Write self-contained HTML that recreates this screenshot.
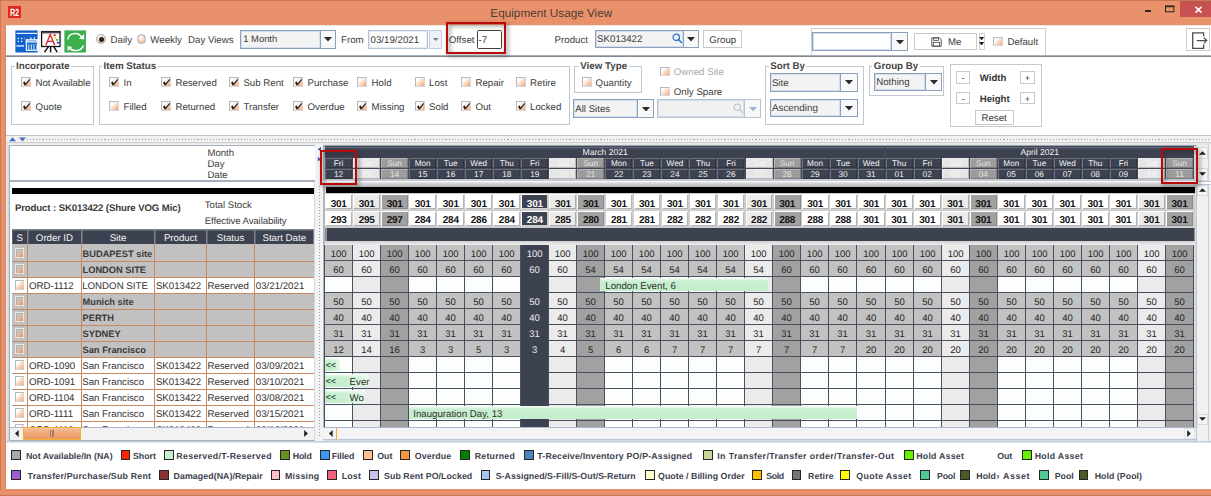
<!DOCTYPE html>
<html><head><meta charset="utf-8"><title>Equipment Usage View</title>
<style>
html,body{margin:0;padding:0;}
body{width:1211px;height:496px;overflow:hidden;position:relative;background:#fff;font-family:"Liberation Sans",sans-serif;text-rendering:geometricPrecision;}
div,span,svg{position:absolute;display:block;}
span{white-space:nowrap;line-height:20px;}
</style></head><body>
<div style="left:0px;top:0px;width:1211px;height:496px;background:#e9916b;"></div>
<div style="left:0px;top:0px;width:1211px;height:1px;background:#c77a57;"></div>
<div style="left:0px;top:0px;width:1px;height:496px;background:#c77a57;"></div>
<div style="left:0px;top:495px;width:1211px;height:1px;background:#c77a57;"></div>
<div style="left:6.2px;top:25px;width:1204.8px;height:464.3px;background:#fff;"></div>
<div style="left:5.2px;top:25px;width:1px;height:465.3px;background:#dd8762;"></div>
<div style="left:8px;top:5.5px;width:13px;height:12.5px;background:#dc2a1c;"></div>
<span style="left:9.7px;top:4px;font-size:10.4px;color:#fff;font-weight:bold;letter-spacing:-0.3px;transform:scaleX(0.7);transform-origin:0 0;">R2</span>
<span style="left:451.3px;top:4px;width:200px;text-align:center;font-size:11.75px;color:#503c35;">Equipment Usage View</span>
<div style="left:1180px;top:1px;width:31px;height:15.6px;background:#c75050;"></div>
<div style="left:1145px;top:10.2px;width:6.3px;height:1.8px;background:#2a2320;"></div>
<svg style="left:1164px;top:4px" width="12" height="10" viewBox="0 0 12 10"><rect x="1.5" y="2.2" width="8.4" height="5.6" fill="none" stroke="#2a2320" stroke-width="1"/><rect x="1" y="1.6" width="9.4" height="1.6" fill="#2a2320"/></svg>
<svg style="left:1193px;top:4.5px" width="12" height="10" viewBox="0 0 12 10"><path d="M2.5 1.9 L8.5 7.6 M8.5 1.9 L2.5 7.6" stroke="#fff" stroke-width="1.5" fill="none"/></svg>
<div style="left:6.2px;top:24.8px;width:1204.8px;height:1.4px;background:#e9e7e6;"></div>
<div style="left:6.2px;top:55.2px;width:1204.8px;height:1px;background:#a9b0ba;"></div>
<div style="left:6.2px;top:56.2px;width:1204.8px;height:1.3px;background:#7f8994;"></div>
<svg style="left:15.4px;top:29.8px" width="22.6" height="22.8" viewBox="0 0 22.6 22.8"><rect x="0" y="0" width="22.6" height="22.8" fill="#dcdcdc"/>
<rect x="0.5" y="0.5" width="22.1" height="21.9" fill="#0f62c9"/>
<rect x="1.4" y="2.8" width="21.2" height="1.2" fill="#e9f1fc"/>
<g fill="#d6e6fb"><rect x="2.6" y="7.8" width="1.5" height="1.4"/><rect x="6.0" y="7.8" width="1.5" height="1.4"/><rect x="9.0" y="7.8" width="1.2" height="1.4" opacity=".6"/><rect x="2.6" y="10.7" width="1.5" height="1.4"/><rect x="6.0" y="10.7" width="1.5" height="1.4"/></g>
<rect x="1.4" y="15.3" width="7.6" height="1.3" fill="#f4f8fe"/>
<rect x="11.4" y="9.9" width="11.2" height="10.4" fill="#0f62c9" stroke="#eef4fd" stroke-width="1.3"/>
<rect x="10.8" y="9.3" width="11.8" height="3.3" fill="#dbe8fa"/>
<rect x="13.2" y="10.4" width="8" height="0.9" fill="#0f62c9" opacity=".55"/>
<rect x="15.2" y="7.2" width="1.2" height="2.6" fill="#e4eefb"/><rect x="18.8" y="7.2" width="1.2" height="2.6" fill="#e4eefb"/>
<rect x="13.2" y="14.6" width="8.4" height="4.9" fill="#d9e7fa"/>
<g fill="#0f62c9"><rect x="14.3" y="14.9" width="1.5" height="4.3"/><rect x="16.9" y="14.9" width="1.5" height="4.3"/><rect x="19.5" y="14.9" width="1.5" height="4.3"/></g></svg>
<svg style="left:39.4px;top:29.8px" width="22.5" height="22.8" viewBox="0 0 22.5 22.8"><rect x="0" y="0" width="22.5" height="22.8" fill="#e2e2e2"/>
<rect x="0.6" y="0.6" width="21.3" height="21.6" fill="#fff"/>
<rect x="2.6" y="1.9" width="18.4" height="14.6" fill="#fff" stroke="#151515" stroke-width="1.3"/>
<rect x="2" y="1.3" width="19.6" height="1.2" fill="#151515"/>
<rect x="3.2" y="3.4" width="17.2" height="0.7" fill="#8a8a8a"/>
<path d="M6.8 15.2 L11.2 4.6 L15.7 15.2 M8.4 11.4 H14" stroke="#d9232b" stroke-width="1.35" fill="none"/>
<rect x="14.6" y="4.4" width="2.1" height="1.6" fill="#e0161e"/><rect x="15.2" y="6.8" width="2.1" height="1.6" fill="#f0d21a"/><rect x="17" y="9.1" width="2.1" height="1.6" fill="#22c02e"/><rect x="17.8" y="11.9" width="2.1" height="1.6" fill="#1a2ae8"/>
<path d="M11.6 16.6 V22.2 M9.4 16.6 L5.6 22.1 M14.8 16.6 L18.2 22.1" stroke="#151515" stroke-width="1.5" fill="none"/></svg>
<svg style="left:63.6px;top:29.8px" width="22.6" height="22.8" viewBox="0 0 22.6 22.8"><rect x="0" y="0" width="22.6" height="22.8" fill="#dcdcdc"/>
<rect x="0.5" y="0.5" width="21.8" height="21.9" fill="#3bb04d"/>
<path d="M3.7 9.4 Q4.6 3.5 11.4 3.5 Q15.6 3.5 17.8 7.6" stroke="#fff" stroke-width="1.5" fill="none"/>
<path d="M20.1 4.1 V9.4 L15 8.7 Z" fill="#fff"/>
<path d="M19.4 15.4 Q17.6 20.6 11.4 20.6 Q7.6 20.6 5.9 18.2" stroke="#fff" stroke-width="1.5" fill="none"/>
<path d="M3.6 16 V21 L8.3 17 Z" fill="#fff"/></svg>
<div style="left:96.4px;top:34.3px;width:9.8px;height:9.8px;border-radius:50%;box-sizing:border-box;border:1px solid #a3adb9;background:radial-gradient(circle at 35% 30%,#ffffff 0%,#fbd9c2 45%,#f0a673 100%);"></div>
<div style="left:98.6px;top:36.5px;width:5.4px;height:5.4px;border-radius:50%;background:#222;"></div>
<span style="left:110.5px;top:31px;font-size:9.7px;color:#3c3c3c;">Daily</span>
<div style="left:136.6px;top:34.3px;width:9.8px;height:9.8px;border-radius:50%;box-sizing:border-box;border:1px solid #a3adb9;background:radial-gradient(circle at 35% 30%,#ffffff 0%,#fbd9c2 45%,#f0a673 100%);"></div>
<span style="left:150.3px;top:31px;font-size:9.7px;color:#3c3c3c;">Weekly</span>
<span style="left:188px;top:31px;font-size:9.7px;color:#3c3c3c;">Day Views</span>
<div style="left:240px;top:29.7px;width:96px;height:18.9px;background:#f8f8f8;border:1px solid #8aa0bd;box-sizing:border-box;"></div>
<div style="left:240px;top:29.7px;width:80.5px;height:18.9px;background:#f3f3f3;border:1px solid #8aa0bd;box-shadow:inset 0 0 0 1px #d4dfee;box-sizing:border-box;"></div>
<span style="left:243.3px;top:29px;font-size:9.4px;color:#3c3c3c;">1 Month</span>
<svg style="left:324.25px;top:37.2px" width="8" height="4.5" viewBox="0 0 8 4.5"><path d="M0 0 H8 L4 4.5 Z" fill="#2b2b2b"/></svg>
<span style="left:341px;top:31px;font-size:9.7px;color:#3c3c3c;">From</span>
<div style="left:367.5px;top:29.7px;width:60px;height:18.9px;box-sizing:border-box;border:1px solid #b5c4d8;background:#fff;box-shadow:inset 0 0 0 1px #e4ebf4;"></div>
<span style="left:370.6px;top:31px;font-size:9.7px;color:#3c3c3c;">03/19/2021</span>
<div style="left:429.2px;top:29.7px;width:12.6px;height:18.9px;box-sizing:border-box;border:1px solid #c3cfde;background:#eef1f5;"></div>
<svg style="left:432.6px;top:37.9px" width="5.4" height="3" viewBox="0 0 5.4 3"><path d="M0 0 H5.4 L2.7 3 Z" fill="#6a7f9c"/></svg>
<span style="left:448.8px;top:31px;font-size:9.7px;color:#3c3c3c;">Offset</span>
<div style="left:477.2px;top:29.7px;width:24.5px;height:19px;box-sizing:border-box;border:1px solid #3f3f3f;border-radius:1.5px;background:#fff;"></div>
<span style="left:478.5px;top:31px;font-size:9.7px;color:#3c3c3c;">-7</span>
<div style="left:446px;top:22.2px;width:60.3px;height:31.6px;box-sizing:border-box;border:2px solid #b90a0a;filter:drop-shadow(2.5px 2.5px 2px rgba(30,20,20,.55));"></div>
<span style="left:554.6px;top:31px;font-size:9.7px;color:#3c3c3c;">Product</span>
<div style="left:595.3px;top:30px;width:103.7px;height:18.3px;background:#f8f8f8;border:1px solid #8aa0bd;box-sizing:border-box;"></div>
<div style="left:595.3px;top:30px;width:88.3px;height:18.3px;background:#f3f3f3;border:1px solid #8aa0bd;box-shadow:inset 0 0 0 1px #d4dfee;box-sizing:border-box;"></div>
<span style="left:597.1px;top:30px;font-size:9.7px;color:#3c3c3c;">SK013422</span>
<svg style="left:687.3px;top:37.2px" width="8" height="4.5" viewBox="0 0 8 4.5"><path d="M0 0 H8 L4 4.5 Z" fill="#2b2b2b"/></svg>
<svg style="left:671.5px;top:33px" width="11" height="11" viewBox="0 0 11 11"><circle cx="4.3" cy="4.3" r="3.2" fill="none" stroke="#2a78d2" stroke-width="1.3"/><path d="M6.6 6.6 L10 10" stroke="#2a78d2" stroke-width="1.5"/></svg>
<div style="left:703.2px;top:29.9px;width:39.1px;height:17.8px;box-sizing:border-box;border:1px solid #c9c9c9;background:#fff;"></div>
<span style="left:703.2px;top:31px;width:39.1px;text-align:center;font-size:9.7px;color:#3c3c3c;">Group</span>
<div style="left:810.5px;top:28px;width:235.8px;height:27.4px;box-sizing:border-box;border:1px solid #cfcfcf;border-bottom:none;background:#fff;"></div>
<div style="left:812px;top:32.3px;width:95.8px;height:18.7px;background:#f8f8f8;border:1px solid #8aa0bd;box-sizing:border-box;"></div>
<div style="left:812px;top:32.3px;width:80.3px;height:18.7px;background:#fff;border:1px solid #8aa0bd;box-shadow:inset 0 0 0 1px #d4dfee;box-sizing:border-box;"></div>
<svg style="left:896.05px;top:39.7px" width="8" height="4.5" viewBox="0 0 8 4.5"><path d="M0 0 H8 L4 4.5 Z" fill="#2b2b2b"/></svg>
<div style="left:914.2px;top:32.7px;width:63.2px;height:17.4px;box-sizing:border-box;border:1px solid #c9c9c9;background:#fff;"></div>
<svg style="left:930.5px;top:36.5px" width="11" height="10" viewBox="0 0 11 10"><path d="M0.8 0.8 H8.4 L10.2 2.4 V9.2 H0.8 Z" fill="none" stroke="#555" stroke-width="1"/><rect x="2.8" y="0.8" width="4.6" height="2.6" fill="none" stroke="#555" stroke-width="0.9"/><rect x="2.4" y="5.4" width="6.2" height="3.8" fill="none" stroke="#555" stroke-width="0.9"/></svg>
<span style="left:948px;top:33px;font-size:9.7px;color:#3c3c3c;">Me</span>
<div style="left:978.6px;top:32.6px;width:6.9px;height:17.5px;box-sizing:border-box;border:1px solid #d2d2d2;background:#fff;"></div>
<svg style="left:979.4px;top:37.25px" width="5.2" height="3.3" viewBox="0 0 5.2 3.3"><path d="M0 0 H5.2 L2.6 3.3 Z" fill="#1e1e1e"/></svg>
<svg style="left:979.4px;top:41.7px" width="5.2" height="3.6" viewBox="0 0 5.2 3.6"><path d="M0 0 H5.2 L2.6 3.6 Z" fill="#1e1e1e"/></svg>
<div style="left:992.9px;top:36.5px;width:9.9px;height:9.9px;box-sizing:border-box;border:1px solid #adbac9;border-top-width:1.5px;border-left-width:1.5px;border-right-color:#d3d8de;border-bottom-color:#d3d8de;background:linear-gradient(135deg,#ffffff 22%,#fde0cb 52%,#f3a673 100%);"></div>
<span style="left:1007.4px;top:33px;font-size:9.7px;color:#3c3c3c;">Default</span>
<div style="left:1186.4px;top:28.3px;width:23.4px;height:22.6px;box-sizing:border-box;border:1px solid #cdcdcd;background:#fff;"></div>
<svg style="left:1190px;top:31px" width="19" height="19" viewBox="0 0 19 19"><path d="M13.6 5.6 V1.9 H2.7 V17.3 H13.6 V13.6" fill="none" stroke="#4d4d4d" stroke-width="1.3"/><path d="M6.8 9.6 H16.6 M13.8 6.8 L16.8 9.6 L13.8 12.4" fill="none" stroke="#4d4d4d" stroke-width="1.2"/></svg>
<div style="left:10.5px;top:65.5px;width:83.5px;height:59.5px;box-sizing:border-box;border:1px solid #c4c8cc;"></div>
<span style="left:14.5px;top:60.9px;font-size:9.75px;line-height:11px;font-weight:bold;color:#454545;background:#fff;padding:0 1.5px;">Incorporate</span>
<div style="left:21.2px;top:77.2px;width:9.9px;height:9.9px;box-sizing:border-box;border:1px solid #adbac9;border-top-width:1.5px;border-left-width:1.5px;border-right-color:#d3d8de;border-bottom-color:#d3d8de;background:linear-gradient(135deg,#ffffff 22%,#fde0cb 52%,#f3a673 100%);"></div>
<svg style="left:21.2px;top:77.2px" width="10" height="10" viewBox="0 0 10 10"><path d="M2.0 5.4 L3.7 4.5 L4.5 6.5 L8.5 2.1 L9.2 2.7 L4.6 8.4 L3.7 8.4 Z" fill="#1a1a1a"/></svg>
<span style="left:35.6px;top:74px;font-size:9.7px;color:#3c3c3c;letter-spacing:-0.12px;">Not Available</span>
<div style="left:21.2px;top:101.3px;width:9.9px;height:9.9px;box-sizing:border-box;border:1px solid #adbac9;border-top-width:1.5px;border-left-width:1.5px;border-right-color:#d3d8de;border-bottom-color:#d3d8de;background:linear-gradient(135deg,#ffffff 22%,#fde0cb 52%,#f3a673 100%);"></div>
<svg style="left:21.2px;top:101.3px" width="10" height="10" viewBox="0 0 10 10"><path d="M2.0 5.4 L3.7 4.5 L4.5 6.5 L8.5 2.1 L9.2 2.7 L4.6 8.4 L3.7 8.4 Z" fill="#1a1a1a"/></svg>
<span style="left:35.6px;top:98px;font-size:9.7px;color:#3c3c3c;">Quote</span>
<div style="left:98.5px;top:65.5px;width:471.5px;height:59.5px;box-sizing:border-box;border:1px solid #c4c8cc;"></div>
<span style="left:102.1px;top:60.9px;font-size:9.75px;line-height:11px;font-weight:bold;color:#454545;background:#fff;padding:0 1.5px;">Item Status</span>
<div style="left:109.1px;top:77.2px;width:9.9px;height:9.9px;box-sizing:border-box;border:1px solid #adbac9;border-top-width:1.5px;border-left-width:1.5px;border-right-color:#d3d8de;border-bottom-color:#d3d8de;background:linear-gradient(135deg,#ffffff 22%,#fde0cb 52%,#f3a673 100%);"></div>
<svg style="left:109.1px;top:77.2px" width="10" height="10" viewBox="0 0 10 10"><path d="M2.0 5.4 L3.7 4.5 L4.5 6.5 L8.5 2.1 L9.2 2.7 L4.6 8.4 L3.7 8.4 Z" fill="#1a1a1a"/></svg>
<span style="left:123.5px;top:74px;font-size:9.7px;color:#3c3c3c;">In</span>
<div style="left:161px;top:77.2px;width:9.9px;height:9.9px;box-sizing:border-box;border:1px solid #adbac9;border-top-width:1.5px;border-left-width:1.5px;border-right-color:#d3d8de;border-bottom-color:#d3d8de;background:linear-gradient(135deg,#ffffff 22%,#fde0cb 52%,#f3a673 100%);"></div>
<svg style="left:161px;top:77.2px" width="10" height="10" viewBox="0 0 10 10"><path d="M2.0 5.4 L3.7 4.5 L4.5 6.5 L8.5 2.1 L9.2 2.7 L4.6 8.4 L3.7 8.4 Z" fill="#1a1a1a"/></svg>
<span style="left:175.4px;top:74px;font-size:9.7px;color:#3c3c3c;">Reserved</span>
<div style="left:229px;top:77.2px;width:9.9px;height:9.9px;box-sizing:border-box;border:1px solid #adbac9;border-top-width:1.5px;border-left-width:1.5px;border-right-color:#d3d8de;border-bottom-color:#d3d8de;background:linear-gradient(135deg,#ffffff 22%,#fde0cb 52%,#f3a673 100%);"></div>
<svg style="left:229px;top:77.2px" width="10" height="10" viewBox="0 0 10 10"><path d="M2.0 5.4 L3.7 4.5 L4.5 6.5 L8.5 2.1 L9.2 2.7 L4.6 8.4 L3.7 8.4 Z" fill="#1a1a1a"/></svg>
<span style="left:243.4px;top:74px;font-size:9.7px;color:#3c3c3c;">Sub Rent</span>
<div style="left:293.1px;top:77.2px;width:9.9px;height:9.9px;box-sizing:border-box;border:1px solid #adbac9;border-top-width:1.5px;border-left-width:1.5px;border-right-color:#d3d8de;border-bottom-color:#d3d8de;background:linear-gradient(135deg,#ffffff 22%,#fde0cb 52%,#f3a673 100%);"></div>
<svg style="left:293.1px;top:77.2px" width="10" height="10" viewBox="0 0 10 10"><path d="M2.0 5.4 L3.7 4.5 L4.5 6.5 L8.5 2.1 L9.2 2.7 L4.6 8.4 L3.7 8.4 Z" fill="#1a1a1a"/></svg>
<span style="left:307.5px;top:74px;font-size:9.7px;color:#3c3c3c;">Purchase</span>
<div style="left:357.2px;top:77.2px;width:9.9px;height:9.9px;box-sizing:border-box;border:1px solid #adbac9;border-top-width:1.5px;border-left-width:1.5px;border-right-color:#d3d8de;border-bottom-color:#d3d8de;background:linear-gradient(135deg,#ffffff 22%,#fde0cb 52%,#f3a673 100%);"></div>
<span style="left:371.6px;top:74px;font-size:9.7px;color:#3c3c3c;">Hold</span>
<div style="left:414.7px;top:77.2px;width:9.9px;height:9.9px;box-sizing:border-box;border:1px solid #adbac9;border-top-width:1.5px;border-left-width:1.5px;border-right-color:#d3d8de;border-bottom-color:#d3d8de;background:linear-gradient(135deg,#ffffff 22%,#fde0cb 52%,#f3a673 100%);"></div>
<span style="left:429.1px;top:74px;font-size:9.7px;color:#3c3c3c;">Lost</span>
<div style="left:461px;top:77.2px;width:9.9px;height:9.9px;box-sizing:border-box;border:1px solid #adbac9;border-top-width:1.5px;border-left-width:1.5px;border-right-color:#d3d8de;border-bottom-color:#d3d8de;background:linear-gradient(135deg,#ffffff 22%,#fde0cb 52%,#f3a673 100%);"></div>
<span style="left:475.4px;top:74px;font-size:9.7px;color:#3c3c3c;">Repair</span>
<div style="left:515.7px;top:77.2px;width:9.9px;height:9.9px;box-sizing:border-box;border:1px solid #adbac9;border-top-width:1.5px;border-left-width:1.5px;border-right-color:#d3d8de;border-bottom-color:#d3d8de;background:linear-gradient(135deg,#ffffff 22%,#fde0cb 52%,#f3a673 100%);"></div>
<span style="left:530.1px;top:74px;font-size:9.7px;color:#3c3c3c;">Retire</span>
<div style="left:109.1px;top:101.3px;width:9.9px;height:9.9px;box-sizing:border-box;border:1px solid #adbac9;border-top-width:1.5px;border-left-width:1.5px;border-right-color:#d3d8de;border-bottom-color:#d3d8de;background:linear-gradient(135deg,#ffffff 22%,#fde0cb 52%,#f3a673 100%);"></div>
<span style="left:123.5px;top:98px;font-size:9.7px;color:#3c3c3c;">Filled</span>
<div style="left:161px;top:101.3px;width:9.9px;height:9.9px;box-sizing:border-box;border:1px solid #adbac9;border-top-width:1.5px;border-left-width:1.5px;border-right-color:#d3d8de;border-bottom-color:#d3d8de;background:linear-gradient(135deg,#ffffff 22%,#fde0cb 52%,#f3a673 100%);"></div>
<svg style="left:161px;top:101.3px" width="10" height="10" viewBox="0 0 10 10"><path d="M2.0 5.4 L3.7 4.5 L4.5 6.5 L8.5 2.1 L9.2 2.7 L4.6 8.4 L3.7 8.4 Z" fill="#1a1a1a"/></svg>
<span style="left:175.4px;top:98px;font-size:9.7px;color:#3c3c3c;">Returned</span>
<div style="left:229px;top:101.3px;width:9.9px;height:9.9px;box-sizing:border-box;border:1px solid #adbac9;border-top-width:1.5px;border-left-width:1.5px;border-right-color:#d3d8de;border-bottom-color:#d3d8de;background:linear-gradient(135deg,#ffffff 22%,#fde0cb 52%,#f3a673 100%);"></div>
<svg style="left:229px;top:101.3px" width="10" height="10" viewBox="0 0 10 10"><path d="M2.0 5.4 L3.7 4.5 L4.5 6.5 L8.5 2.1 L9.2 2.7 L4.6 8.4 L3.7 8.4 Z" fill="#1a1a1a"/></svg>
<span style="left:243.4px;top:98px;font-size:9.7px;color:#3c3c3c;">Transfer</span>
<div style="left:293.1px;top:101.3px;width:9.9px;height:9.9px;box-sizing:border-box;border:1px solid #adbac9;border-top-width:1.5px;border-left-width:1.5px;border-right-color:#d3d8de;border-bottom-color:#d3d8de;background:linear-gradient(135deg,#ffffff 22%,#fde0cb 52%,#f3a673 100%);"></div>
<svg style="left:293.1px;top:101.3px" width="10" height="10" viewBox="0 0 10 10"><path d="M2.0 5.4 L3.7 4.5 L4.5 6.5 L8.5 2.1 L9.2 2.7 L4.6 8.4 L3.7 8.4 Z" fill="#1a1a1a"/></svg>
<span style="left:307.5px;top:98px;font-size:9.7px;color:#3c3c3c;">Overdue</span>
<div style="left:357.2px;top:101.3px;width:9.9px;height:9.9px;box-sizing:border-box;border:1px solid #adbac9;border-top-width:1.5px;border-left-width:1.5px;border-right-color:#d3d8de;border-bottom-color:#d3d8de;background:linear-gradient(135deg,#ffffff 22%,#fde0cb 52%,#f3a673 100%);"></div>
<svg style="left:357.2px;top:101.3px" width="10" height="10" viewBox="0 0 10 10"><path d="M2.0 5.4 L3.7 4.5 L4.5 6.5 L8.5 2.1 L9.2 2.7 L4.6 8.4 L3.7 8.4 Z" fill="#1a1a1a"/></svg>
<span style="left:371.6px;top:98px;font-size:9.7px;color:#3c3c3c;">Missing</span>
<div style="left:414.7px;top:101.3px;width:9.9px;height:9.9px;box-sizing:border-box;border:1px solid #adbac9;border-top-width:1.5px;border-left-width:1.5px;border-right-color:#d3d8de;border-bottom-color:#d3d8de;background:linear-gradient(135deg,#ffffff 22%,#fde0cb 52%,#f3a673 100%);"></div>
<svg style="left:414.7px;top:101.3px" width="10" height="10" viewBox="0 0 10 10"><path d="M2.0 5.4 L3.7 4.5 L4.5 6.5 L8.5 2.1 L9.2 2.7 L4.6 8.4 L3.7 8.4 Z" fill="#1a1a1a"/></svg>
<span style="left:429.1px;top:98px;font-size:9.7px;color:#3c3c3c;">Sold</span>
<div style="left:461px;top:101.3px;width:9.9px;height:9.9px;box-sizing:border-box;border:1px solid #adbac9;border-top-width:1.5px;border-left-width:1.5px;border-right-color:#d3d8de;border-bottom-color:#d3d8de;background:linear-gradient(135deg,#ffffff 22%,#fde0cb 52%,#f3a673 100%);"></div>
<svg style="left:461px;top:101.3px" width="10" height="10" viewBox="0 0 10 10"><path d="M2.0 5.4 L3.7 4.5 L4.5 6.5 L8.5 2.1 L9.2 2.7 L4.6 8.4 L3.7 8.4 Z" fill="#1a1a1a"/></svg>
<span style="left:475.4px;top:98px;font-size:9.7px;color:#3c3c3c;">Out</span>
<div style="left:515.7px;top:101.3px;width:9.9px;height:9.9px;box-sizing:border-box;border:1px solid #adbac9;border-top-width:1.5px;border-left-width:1.5px;border-right-color:#d3d8de;border-bottom-color:#d3d8de;background:linear-gradient(135deg,#ffffff 22%,#fde0cb 52%,#f3a673 100%);"></div>
<svg style="left:515.7px;top:101.3px" width="10" height="10" viewBox="0 0 10 10"><path d="M2.0 5.4 L3.7 4.5 L4.5 6.5 L8.5 2.1 L9.2 2.7 L4.6 8.4 L3.7 8.4 Z" fill="#1a1a1a"/></svg>
<span style="left:530.1px;top:98px;font-size:9.7px;color:#3c3c3c;">Locked</span>
<div style="left:574.4px;top:65.5px;width:67.6px;height:27.1px;box-sizing:border-box;border:1px solid #c4c8cc;"></div>
<span style="left:578.8px;top:60.9px;font-size:9.75px;line-height:11px;font-weight:bold;color:#454545;background:#fff;padding:0 1.5px;">View Type</span>
<div style="left:581.7px;top:77.2px;width:9.9px;height:9.9px;box-sizing:border-box;border:1px solid #adbac9;border-top-width:1.5px;border-left-width:1.5px;border-right-color:#d3d8de;border-bottom-color:#d3d8de;background:linear-gradient(135deg,#ffffff 22%,#fde0cb 52%,#f3a673 100%);"></div>
<span style="left:595.6px;top:74px;font-size:9.7px;color:#3c3c3c;">Quantity</span>
<div style="left:660.1px;top:66.5px;width:9.9px;height:9.9px;box-sizing:border-box;border:1px solid #adbac9;border-top-width:1.5px;border-left-width:1.5px;border-right-color:#d3d8de;border-bottom-color:#d3d8de;background:linear-gradient(135deg,#ffffff 22%,#fde0cb 52%,#f3a673 100%);"></div>
<span style="left:673.8px;top:63px;font-size:9.7px;color:#a9a9a9;">Owned Site</span>
<div style="left:660.1px;top:86.5px;width:9.9px;height:9.9px;box-sizing:border-box;border:1px solid #adbac9;border-top-width:1.5px;border-left-width:1.5px;border-right-color:#d3d8de;border-bottom-color:#d3d8de;background:linear-gradient(135deg,#ffffff 22%,#fde0cb 52%,#f3a673 100%);"></div>
<span style="left:673.8px;top:83px;font-size:9.7px;color:#3c3c3c;">Only Spare</span>
<div style="left:573px;top:99.4px;width:81.4px;height:18.6px;background:#f8f8f8;border:1px solid #8aa0bd;box-sizing:border-box;"></div>
<div style="left:573px;top:99.4px;width:65.3px;height:18.6px;background:#f3f3f3;border:1px solid #8aa0bd;box-shadow:inset 0 0 0 1px #d4dfee;box-sizing:border-box;"></div>
<span style="left:575.2px;top:100px;font-size:9.7px;color:#3c3c3c;">All Sites</span>
<svg style="left:642.35px;top:106.75px" width="8" height="4.5" viewBox="0 0 8 4.5"><path d="M0 0 H8 L4 4.5 Z" fill="#2b2b2b"/></svg>
<div style="left:657px;top:99.4px;width:103.6px;height:18.6px;background:#f8f8f8;border:1px solid #b9c3d0;box-sizing:border-box;"></div>
<div style="left:657px;top:99.4px;width:88px;height:18.6px;background:#f1f1f1;border:1px solid #b9c3d0;box-shadow:inset 0 0 0 1px #d4dfee;box-sizing:border-box;"></div>
<svg style="left:748.8px;top:106.75px" width="8" height="4.5" viewBox="0 0 8 4.5"><path d="M0 0 H8 L4 4.5 Z" fill="#9db4d4"/></svg>
<svg style="left:733px;top:102.6px" width="11" height="11" viewBox="0 0 11 11"><circle cx="4.3" cy="4.3" r="3.2" fill="none" stroke="#c6c6c6" stroke-width="1.2"/><path d="M6.6 6.6 L10 10" stroke="#c6c6c6" stroke-width="1.4"/></svg>
<div style="left:764.5px;top:65.5px;width:99.1px;height:59.5px;box-sizing:border-box;border:1px solid #c4c8cc;"></div>
<span style="left:768.8px;top:60.9px;font-size:9.75px;line-height:11px;font-weight:bold;color:#454545;background:#fff;padding:0 1.5px;">Sort By</span>
<div style="left:769.5px;top:73px;width:88.1px;height:18.8px;background:#f8f8f8;border:1px solid #8aa0bd;box-sizing:border-box;"></div>
<div style="left:769.5px;top:73px;width:71.8px;height:18.8px;background:#f3f3f3;border:1px solid #8aa0bd;box-shadow:inset 0 0 0 1px #d4dfee;box-sizing:border-box;"></div>
<span style="left:771.9px;top:74px;font-size:9.7px;color:#3c3c3c;">Site</span>
<svg style="left:845.45px;top:80.45px" width="8" height="4.5" viewBox="0 0 8 4.5"><path d="M0 0 H8 L4 4.5 Z" fill="#2b2b2b"/></svg>
<div style="left:769.5px;top:98.7px;width:88.1px;height:18.8px;background:#f8f8f8;border:1px solid #8aa0bd;box-sizing:border-box;"></div>
<div style="left:769.5px;top:98.7px;width:71.8px;height:18.8px;background:#f3f3f3;border:1px solid #8aa0bd;box-shadow:inset 0 0 0 1px #d4dfee;box-sizing:border-box;"></div>
<span style="left:771.9px;top:99px;font-size:9.9px;color:#3c3c3c;">Ascending</span>
<svg style="left:845.45px;top:106.15px" width="8" height="4.5" viewBox="0 0 8 4.5"><path d="M0 0 H8 L4 4.5 Z" fill="#2b2b2b"/></svg>
<div style="left:868.7px;top:65.8px;width:75.3px;height:30.6px;box-sizing:border-box;border:1px solid #c4c8cc;"></div>
<span style="left:872.3px;top:61.2px;font-size:9.75px;line-height:11px;font-weight:bold;color:#454545;background:#fff;padding:0 1.5px;">Group By</span>
<div style="left:874px;top:73.2px;width:67.8px;height:18.1px;background:#f8f8f8;border:1px solid #8aa0bd;box-sizing:border-box;"></div>
<div style="left:874px;top:73.2px;width:51.8px;height:18.1px;background:#f3f3f3;border:1px solid #8aa0bd;box-shadow:inset 0 0 0 1px #d4dfee;box-sizing:border-box;"></div>
<span style="left:876.2px;top:73px;font-size:9.7px;color:#3c3c3c;">Nothing</span>
<svg style="left:929.8px;top:80.3px" width="8" height="4.5" viewBox="0 0 8 4.5"><path d="M0 0 H8 L4 4.5 Z" fill="#2b2b2b"/></svg>
<div style="left:950.4px;top:64.3px;width:91.4px;height:62.4px;box-sizing:border-box;border:1px solid #c9c9c9;"></div>
<div style="left:956.2px;top:71px;width:14px;height:12.5px;box-sizing:border-box;border:1px solid #c9c9c9;background:#fff;"></div>
<span style="left:956.2px;top:68px;width:14px;text-align:center;font-size:9px;color:#3c3c3c;">-</span>
<div style="left:1020px;top:71px;width:14.6px;height:12.5px;box-sizing:border-box;border:1px solid #c9c9c9;background:#fff;"></div>
<span style="left:1020px;top:68px;width:14.6px;text-align:center;font-size:9px;color:#3c3c3c;">+</span>
<span style="left:979.8px;top:69px;font-size:9.6px;color:#333;font-weight:bold;">Width</span>
<div style="left:956.2px;top:91.8px;width:14px;height:12.6px;box-sizing:border-box;border:1px solid #c9c9c9;background:#fff;"></div>
<span style="left:956.2px;top:89px;width:14px;text-align:center;font-size:9px;color:#3c3c3c;">-</span>
<div style="left:1020px;top:91.8px;width:14.6px;height:12.6px;box-sizing:border-box;border:1px solid #c9c9c9;background:#fff;"></div>
<span style="left:1020px;top:89px;width:14.6px;text-align:center;font-size:9px;color:#3c3c3c;">+</span>
<span style="left:979.8px;top:90px;font-size:9.6px;color:#333;font-weight:bold;">Height</span>
<div style="left:974.5px;top:110px;width:39.2px;height:14.7px;box-sizing:border-box;border:1px solid #c9c9c9;background:#fff;"></div>
<span style="left:974.5px;top:109px;width:39.2px;text-align:center;font-size:9.7px;color:#3c3c3c;">Reset</span>
<div style="left:6.2px;top:134.9px;width:1204.8px;height:1.1px;background:#c2c2c2;"></div>
<div style="left:6.2px;top:136px;width:1204.8px;height:6px;background:#f1f1f1;"></div>
<div style="left:27.4px;top:139px;width:1183.6px;height:1.1px;background:repeating-linear-gradient(90deg,#9c9c9c 0 1.1px,transparent 1.1px 3.1px);"></div>
<svg style="left:9px;top:137px" width="18" height="5" viewBox="0 0 18 5"><path d="M0 4.2 L3.5 0.2 L7 4.2 Z" fill="#4a6fc0"/><path d="M10 0.4 L17 0.4 L13.5 4.4 Z" fill="#4a6fc0"/></svg>
<div style="left:6.2px;top:142px;width:1204.8px;height:1px;background:#cfcfcf;"></div>
<div style="left:6.2px;top:143px;width:2.6px;height:300px;background:linear-gradient(90deg,#efefef,#cfd3d8);"></div>
<div style="left:6.2px;top:143px;width:317px;height:2px;background:linear-gradient(180deg,#e4e4e4,#f6f6f6);"></div>
<div style="left:9.3px;top:144.9px;width:306.5px;height:36.4px;box-sizing:border-box;border:1px solid #a6b0bc;border-right-color:#c6ccd3;background:#fff;"></div>
<span style="left:207.4px;top:144px;font-size:9.6px;color:#3c3c3c;">Month</span>
<span style="left:207.4px;top:155px;font-size:9.6px;color:#3c3c3c;">Day</span>
<span style="left:207.4px;top:166px;font-size:9.6px;color:#3c3c3c;">Date</span>
<div style="left:9.3px;top:181.3px;width:305.3px;height:259.9px;box-sizing:border-box;border:1px solid #a6b0bc;border-right-color:#d6dae0;background:#fff;"></div>
<div style="left:11.8px;top:187.6px;width:301.8px;height:6.5px;background:#000;"></div>
<span style="left:14.9px;top:199px;font-size:9.6px;color:#3a3a3a;font-weight:bold;letter-spacing:-0.099px;">Product : SK013422 (Shure VOG Mic)</span>
<span style="left:204.8px;top:196px;font-size:9.6px;color:#3c3c3c;">Total Stock</span>
<span style="left:204.8px;top:212px;font-size:9.6px;color:#3c3c3c;letter-spacing:-0.1px;">Effective Availability</span>
<div style="left:11.8px;top:229.3px;width:301.8px;height:15px;background:#7d8391;"></div>
<div style="left:12.2px;top:229.6px;width:15.1px;height:14.7px;background:#3d4251;box-shadow:inset 1px 1px 0 #5d6373;"></div>
<span style="left:7.2px;top:229px;width:25.1px;text-align:center;font-size:9.7px;color:#f4f4f4;">S</span>
<div style="left:28.3px;top:229.6px;width:52.3px;height:14.7px;background:#3d4251;box-shadow:inset 1px 1px 0 #5d6373;"></div>
<span style="left:23.3px;top:229px;width:62.3px;text-align:center;font-size:9.7px;color:#f4f4f4;">Order ID</span>
<div style="left:81.6px;top:229.6px;width:72.8px;height:14.7px;background:#3d4251;box-shadow:inset 1px 1px 0 #5d6373;"></div>
<span style="left:76.6px;top:229px;width:82.8px;text-align:center;font-size:9.7px;color:#f4f4f4;">Site</span>
<div style="left:155.3px;top:229.6px;width:50.6px;height:14.7px;background:#3d4251;box-shadow:inset 1px 1px 0 #5d6373;"></div>
<span style="left:150.3px;top:229px;width:60.6px;text-align:center;font-size:9.7px;color:#f4f4f4;">Product</span>
<div style="left:206.8px;top:229.6px;width:47.5px;height:14.7px;background:#3d4251;box-shadow:inset 1px 1px 0 #5d6373;"></div>
<span style="left:201.8px;top:229px;width:57.5px;text-align:center;font-size:9.7px;color:#f4f4f4;">Status</span>
<div style="left:255.2px;top:229.6px;width:58.2px;height:14.7px;background:#3d4251;box-shadow:inset 1px 1px 0 #5d6373;"></div>
<span style="left:250.2px;top:229px;width:68.2px;text-align:center;font-size:9.7px;color:#f4f4f4;">Start Date</span>
<div style="left:11px;top:244px;width:302.6px;height:183.2px;overflow:hidden;">
<div style="left:0.8px;top:0px;width:301.8px;height:17px;background:#c1c1c1;"></div>
<div style="left:0.8px;top:17px;width:301.8px;height:16px;background:#c1c1c1;"></div>
<div style="left:0.8px;top:33px;width:301.8px;height:16px;background:#fff;"></div>
<div style="left:0.8px;top:49px;width:301.8px;height:16px;background:#c1c1c1;"></div>
<div style="left:0.8px;top:65px;width:301.8px;height:16px;background:#c1c1c1;"></div>
<div style="left:0.8px;top:81px;width:301.8px;height:16px;background:#c1c1c1;"></div>
<div style="left:0.8px;top:97px;width:301.8px;height:16px;background:#c1c1c1;"></div>
<div style="left:0.8px;top:113px;width:301.8px;height:16px;background:#fff;"></div>
<div style="left:0.8px;top:129px;width:301.8px;height:16px;background:#fff;"></div>
<div style="left:0.8px;top:145px;width:301.8px;height:16px;background:#fff;"></div>
<div style="left:0.8px;top:161px;width:301.8px;height:16px;background:#fff;"></div>
<div style="left:0.8px;top:177px;width:301.8px;height:16px;background:#fff;"></div>
<div style="left:0.8px;top:16.7px;width:301.8px;height:1.2px;background:#c98a63;"></div>
<div style="left:0.8px;top:32.7px;width:301.8px;height:1.2px;background:#c98a63;"></div>
<div style="left:0.8px;top:48.7px;width:301.8px;height:1.2px;background:#c98a63;"></div>
<div style="left:0.8px;top:64.7px;width:301.8px;height:1.2px;background:#c98a63;"></div>
<div style="left:0.8px;top:80.7px;width:301.8px;height:1.2px;background:#c98a63;"></div>
<div style="left:0.8px;top:96.7px;width:301.8px;height:1.2px;background:#c98a63;"></div>
<div style="left:0.8px;top:112.7px;width:301.8px;height:1.2px;background:#c98a63;"></div>
<div style="left:0.8px;top:128.7px;width:301.8px;height:1.2px;background:#c98a63;"></div>
<div style="left:0.8px;top:144.7px;width:301.8px;height:1.2px;background:#c98a63;"></div>
<div style="left:0.8px;top:160.7px;width:301.8px;height:1.2px;background:#c98a63;"></div>
<div style="left:0.8px;top:176.7px;width:301.8px;height:1.2px;background:#c98a63;"></div>
<div style="left:0.8px;top:192.7px;width:301.8px;height:1.2px;background:#c98a63;"></div>
<div style="left:16.3px;top:0.3px;width:1.1px;height:182.9px;background:#c98a63;"></div>
<div style="left:69.6px;top:0.3px;width:1.1px;height:182.9px;background:#c98a63;"></div>
<div style="left:143.3px;top:0.3px;width:1.1px;height:182.9px;background:#c98a63;"></div>
<div style="left:194.8px;top:0.3px;width:1.1px;height:182.9px;background:#c98a63;"></div>
<div style="left:243.2px;top:0.3px;width:1.1px;height:182.9px;background:#c98a63;"></div>
<div style="left:3.5px;top:4.4px;width:9.9px;height:9.9px;box-sizing:border-box;border:1px solid #e6e6e6;box-shadow:inset 0.6px 0.6px 0 0.4px #aeb3ba;background:linear-gradient(135deg,#cbcbcb 18%,#e2b79c 55%,#ec9560 100%);"></div>
<span style="left:71.5px;top:0px;font-size:9.3px;color:#3a3a3a;font-weight:bold;">BUDAPEST site</span>
<div style="left:3.5px;top:20.4px;width:9.9px;height:9.9px;box-sizing:border-box;border:1px solid #e6e6e6;box-shadow:inset 0.6px 0.6px 0 0.4px #aeb3ba;background:linear-gradient(135deg,#cbcbcb 18%,#e2b79c 55%,#ec9560 100%);"></div>
<span style="left:71.5px;top:16px;font-size:9.3px;color:#3a3a3a;font-weight:bold;">LONDON SITE</span>
<div style="left:3.5px;top:36.4px;width:9.9px;height:9.9px;box-sizing:border-box;border:1px solid #adbac9;border-top-width:1.5px;border-left-width:1.5px;border-right-color:#d3d8de;border-bottom-color:#d3d8de;background:linear-gradient(135deg,#ffffff 22%,#fde0cb 52%,#f3a673 100%);"></div>
<span style="left:17.9px;top:33px;font-size:9.7px;color:#333;">ORD-1112</span>
<span style="left:71.2px;top:33px;font-size:9.7px;color:#333;">LONDON SITE</span>
<span style="left:144.9px;top:33px;font-size:9.7px;color:#333;">SK013422</span>
<span style="left:196.4px;top:33px;font-size:9.7px;color:#333;">Reserved</span>
<span style="left:244.8px;top:33px;font-size:9.7px;color:#333;">03/21/2021</span>
<div style="left:3.5px;top:52.4px;width:9.9px;height:9.9px;box-sizing:border-box;border:1px solid #e6e6e6;box-shadow:inset 0.6px 0.6px 0 0.4px #aeb3ba;background:linear-gradient(135deg,#cbcbcb 18%,#e2b79c 55%,#ec9560 100%);"></div>
<span style="left:71.5px;top:48px;font-size:9.3px;color:#3a3a3a;font-weight:bold;">Munich site</span>
<div style="left:3.5px;top:68.4px;width:9.9px;height:9.9px;box-sizing:border-box;border:1px solid #e6e6e6;box-shadow:inset 0.6px 0.6px 0 0.4px #aeb3ba;background:linear-gradient(135deg,#cbcbcb 18%,#e2b79c 55%,#ec9560 100%);"></div>
<span style="left:71.5px;top:64px;font-size:9.3px;color:#3a3a3a;font-weight:bold;">PERTH</span>
<div style="left:3.5px;top:84.4px;width:9.9px;height:9.9px;box-sizing:border-box;border:1px solid #e6e6e6;box-shadow:inset 0.6px 0.6px 0 0.4px #aeb3ba;background:linear-gradient(135deg,#cbcbcb 18%,#e2b79c 55%,#ec9560 100%);"></div>
<span style="left:71.5px;top:80px;font-size:9.3px;color:#3a3a3a;font-weight:bold;">SYDNEY</span>
<div style="left:3.5px;top:100.4px;width:9.9px;height:9.9px;box-sizing:border-box;border:1px solid #e6e6e6;box-shadow:inset 0.6px 0.6px 0 0.4px #aeb3ba;background:linear-gradient(135deg,#cbcbcb 18%,#e2b79c 55%,#ec9560 100%);"></div>
<span style="left:71.5px;top:96px;font-size:9.3px;color:#3a3a3a;font-weight:bold;">San Francisco</span>
<div style="left:3.5px;top:116.4px;width:9.9px;height:9.9px;box-sizing:border-box;border:1px solid #adbac9;border-top-width:1.5px;border-left-width:1.5px;border-right-color:#d3d8de;border-bottom-color:#d3d8de;background:linear-gradient(135deg,#ffffff 22%,#fde0cb 52%,#f3a673 100%);"></div>
<span style="left:17.9px;top:113px;font-size:9.7px;color:#333;">ORD-1090</span>
<span style="left:71.2px;top:113px;font-size:9.7px;color:#333;">San Francisco</span>
<span style="left:144.9px;top:113px;font-size:9.7px;color:#333;">SK013422</span>
<span style="left:196.4px;top:113px;font-size:9.7px;color:#333;">Reserved</span>
<span style="left:244.8px;top:113px;font-size:9.7px;color:#333;">03/09/2021</span>
<div style="left:3.5px;top:132.4px;width:9.9px;height:9.9px;box-sizing:border-box;border:1px solid #adbac9;border-top-width:1.5px;border-left-width:1.5px;border-right-color:#d3d8de;border-bottom-color:#d3d8de;background:linear-gradient(135deg,#ffffff 22%,#fde0cb 52%,#f3a673 100%);"></div>
<span style="left:17.9px;top:129px;font-size:9.7px;color:#333;">ORD-1091</span>
<span style="left:71.2px;top:129px;font-size:9.7px;color:#333;">San Francisco</span>
<span style="left:144.9px;top:129px;font-size:9.7px;color:#333;">SK013422</span>
<span style="left:196.4px;top:129px;font-size:9.7px;color:#333;">Reserved</span>
<span style="left:244.8px;top:129px;font-size:9.7px;color:#333;">03/10/2021</span>
<div style="left:3.5px;top:148.4px;width:9.9px;height:9.9px;box-sizing:border-box;border:1px solid #adbac9;border-top-width:1.5px;border-left-width:1.5px;border-right-color:#d3d8de;border-bottom-color:#d3d8de;background:linear-gradient(135deg,#ffffff 22%,#fde0cb 52%,#f3a673 100%);"></div>
<span style="left:17.9px;top:145px;font-size:9.7px;color:#333;">ORD-1104</span>
<span style="left:71.2px;top:145px;font-size:9.7px;color:#333;">San Francisco</span>
<span style="left:144.9px;top:145px;font-size:9.7px;color:#333;">SK013422</span>
<span style="left:196.4px;top:145px;font-size:9.7px;color:#333;">Reserved</span>
<span style="left:244.8px;top:145px;font-size:9.7px;color:#333;">03/08/2021</span>
<div style="left:3.5px;top:164.4px;width:9.9px;height:9.9px;box-sizing:border-box;border:1px solid #adbac9;border-top-width:1.5px;border-left-width:1.5px;border-right-color:#d3d8de;border-bottom-color:#d3d8de;background:linear-gradient(135deg,#ffffff 22%,#fde0cb 52%,#f3a673 100%);"></div>
<span style="left:17.9px;top:161px;font-size:9.7px;color:#333;">ORD-1111</span>
<span style="left:71.2px;top:161px;font-size:9.7px;color:#333;">San Francisco</span>
<span style="left:144.9px;top:161px;font-size:9.7px;color:#333;">SK013422</span>
<span style="left:196.4px;top:161px;font-size:9.7px;color:#333;">Reserved</span>
<span style="left:244.8px;top:161px;font-size:9.7px;color:#333;">03/15/2021</span>
<div style="left:3.5px;top:180.4px;width:9.9px;height:9.9px;box-sizing:border-box;border:1px solid #adbac9;border-top-width:1.5px;border-left-width:1.5px;border-right-color:#d3d8de;border-bottom-color:#d3d8de;background:linear-gradient(135deg,#ffffff 22%,#fde0cb 52%,#f3a673 100%);"></div>
<span style="left:17.9px;top:177px;font-size:9.7px;color:#333;">ORD-1113</span>
<span style="left:71.2px;top:177px;font-size:9.7px;color:#333;">San Francisco</span>
<span style="left:144.9px;top:177px;font-size:9.7px;color:#333;">SK013422</span>
<span style="left:196.4px;top:177px;font-size:9.7px;color:#333;">Reserved</span>
<span style="left:244.8px;top:177px;font-size:9.7px;color:#333;">03/16/2021</span>
</div>
<div style="left:10.3px;top:427.2px;width:303.3px;height:13px;background:#f2f2f2;border-top:1px solid #aab9cc;box-sizing:border-box;"></div>
<div style="left:22.6px;top:427.4px;width:58.4px;height:12.6px;box-sizing:border-box;border:1px solid #f2b134;background:linear-gradient(180deg,#f6c2a0 0%,#efa878 45%,#ec9a66 100%);"></div>
<div style="left:50.2px;top:430px;width:0.6px;height:7.4px;background:#9a7a68;"></div>
<div style="left:51.6px;top:430px;width:0.6px;height:7.4px;background:#9a7a68;"></div>
<div style="left:53px;top:430px;width:0.6px;height:7.4px;background:#9a7a68;"></div>
<svg style="left:15px;top:430.2px" width="4" height="7" viewBox="0 0 4 7"><path d="M3.6 0 V7 L0 3.5 Z" fill="#1e1e1e"/></svg>
<svg style="left:303.5px;top:430.2px" width="4" height="7" viewBox="0 0 4 7"><path d="M0.2 0 V7 L3.8 3.5 Z" fill="#1e1e1e"/></svg>
<div style="left:314.6px;top:144px;width:8.6px;height:297.2px;background:#f3f3f3;"></div>
<div style="left:318.9px;top:186px;width:1px;height:252px;background:repeating-linear-gradient(180deg,#9e9e9e 0 1.1px,transparent 1.1px 3px);"></div>
<svg style="left:317.2px;top:147.2px" width="4.5" height="15" viewBox="0 0 4.5 15"><path d="M4 0 V4.4 L0.6 2.2 Z" fill="#3d5fa8"/><path d="M0.8 10 V14.4 L4.2 12.2 Z" fill="#3d5fa8"/></svg>
<div style="left:323.2px;top:144.5px;width:873.8px;height:296.7px;background:#dcdcdc;"></div>
<div style="left:323.2px;top:143px;width:887.8px;height:2.4px;background:#e6e6e6;"></div>
<div style="left:323.2px;top:145.4px;width:873.8px;height:1px;background:#9aa3ad;"></div>
<div style="left:323.2px;top:146.4px;width:1.4px;height:280.8px;background:#aeb6c0;"></div>
<div style="left:324.6px;top:146.4px;width:869.9px;height:32.8px;background:#444a58;"></div>
<div style="left:325.4px;top:146.8px;width:558.9px;height:11.2px;background:linear-gradient(180deg,#6a7282 0,#3d4251 2px);"></div>
<div style="left:885.7px;top:146.8px;width:308.2px;height:11.2px;background:linear-gradient(180deg,#6a7282 0,#3d4251 2px);"></div>
<span style="left:555.2px;top:142px;width:100px;text-align:center;font-size:8.6px;color:#f2f2f2;">March 2021</span>
<span style="left:989.8px;top:142px;width:100px;text-align:center;font-size:8.6px;color:#f2f2f2;">April 2021</span>
<div style="left:325.05px;top:158.4px;width:27.03px;height:9.6px;background:#3d4251;box-shadow:inset 1px 1px 0 rgba(255,255,255,.26), inset -1px -1px 0 rgba(0,0,0,.2);"></div>
<div style="left:325.05px;top:169px;width:27.03px;height:9.6px;background:#3d4251;box-shadow:inset 1px 1px 0 rgba(255,255,255,.26), inset -1px -1px 0 rgba(0,0,0,.2);"></div>
<span style="left:323.56px;top:154px;width:30px;text-align:center;font-size:8.2px;color:#f2f2f2;">Fri</span>
<span style="left:323.56px;top:164px;width:30px;text-align:center;font-size:8.3px;color:#f2f2f2;">12</span>
<div style="left:353.08px;top:158.4px;width:27.03px;height:9.6px;background:#e6e6e6;box-shadow:inset 1px 1px 0 rgba(255,255,255,.26), inset -1px -1px 0 rgba(0,0,0,.2);"></div>
<div style="left:353.08px;top:169px;width:27.03px;height:9.6px;background:#e6e6e6;box-shadow:inset 1px 1px 0 rgba(255,255,255,.26), inset -1px -1px 0 rgba(0,0,0,.2);"></div>
<span style="left:351.59px;top:154px;width:30px;text-align:center;font-size:8.2px;color:#f7f7f7;">Sat</span>
<span style="left:351.59px;top:164px;width:30px;text-align:center;font-size:8.3px;color:#f7f7f7;">13</span>
<div style="left:381.11px;top:158.4px;width:27.03px;height:9.6px;background:#9c9c9c;box-shadow:inset 1px 1px 0 rgba(255,255,255,.26), inset -1px -1px 0 rgba(0,0,0,.2);"></div>
<div style="left:381.11px;top:169px;width:27.03px;height:9.6px;background:#9c9c9c;box-shadow:inset 1px 1px 0 rgba(255,255,255,.26), inset -1px -1px 0 rgba(0,0,0,.2);"></div>
<span style="left:379.62px;top:154px;width:30px;text-align:center;font-size:8.2px;color:#e6e6e6;">Sun</span>
<span style="left:379.62px;top:164px;width:30px;text-align:center;font-size:8.3px;color:#e6e6e6;">14</span>
<div style="left:409.14px;top:158.4px;width:27.03px;height:9.6px;background:#3d4251;box-shadow:inset 1px 1px 0 rgba(255,255,255,.26), inset -1px -1px 0 rgba(0,0,0,.2);"></div>
<div style="left:409.14px;top:169px;width:27.03px;height:9.6px;background:#3d4251;box-shadow:inset 1px 1px 0 rgba(255,255,255,.26), inset -1px -1px 0 rgba(0,0,0,.2);"></div>
<span style="left:407.65px;top:154px;width:30px;text-align:center;font-size:8.2px;color:#f2f2f2;">Mon</span>
<span style="left:407.65px;top:164px;width:30px;text-align:center;font-size:8.3px;color:#f2f2f2;">15</span>
<div style="left:437.17px;top:158.4px;width:27.03px;height:9.6px;background:#3d4251;box-shadow:inset 1px 1px 0 rgba(255,255,255,.26), inset -1px -1px 0 rgba(0,0,0,.2);"></div>
<div style="left:437.17px;top:169px;width:27.03px;height:9.6px;background:#3d4251;box-shadow:inset 1px 1px 0 rgba(255,255,255,.26), inset -1px -1px 0 rgba(0,0,0,.2);"></div>
<span style="left:435.68px;top:154px;width:30px;text-align:center;font-size:8.2px;color:#f2f2f2;">Tue</span>
<span style="left:435.68px;top:164px;width:30px;text-align:center;font-size:8.3px;color:#f2f2f2;">16</span>
<div style="left:465.2px;top:158.4px;width:27.03px;height:9.6px;background:#3d4251;box-shadow:inset 1px 1px 0 rgba(255,255,255,.26), inset -1px -1px 0 rgba(0,0,0,.2);"></div>
<div style="left:465.2px;top:169px;width:27.03px;height:9.6px;background:#3d4251;box-shadow:inset 1px 1px 0 rgba(255,255,255,.26), inset -1px -1px 0 rgba(0,0,0,.2);"></div>
<span style="left:463.71px;top:154px;width:30px;text-align:center;font-size:8.2px;color:#f2f2f2;">Wed</span>
<span style="left:463.71px;top:164px;width:30px;text-align:center;font-size:8.3px;color:#f2f2f2;">17</span>
<div style="left:493.23px;top:158.4px;width:27.03px;height:9.6px;background:#3d4251;box-shadow:inset 1px 1px 0 rgba(255,255,255,.26), inset -1px -1px 0 rgba(0,0,0,.2);"></div>
<div style="left:493.23px;top:169px;width:27.03px;height:9.6px;background:#3d4251;box-shadow:inset 1px 1px 0 rgba(255,255,255,.26), inset -1px -1px 0 rgba(0,0,0,.2);"></div>
<span style="left:491.75px;top:154px;width:30px;text-align:center;font-size:8.2px;color:#f2f2f2;">Thu</span>
<span style="left:491.75px;top:164px;width:30px;text-align:center;font-size:8.3px;color:#f2f2f2;">18</span>
<div style="left:521.26px;top:158.4px;width:27.03px;height:9.6px;background:#3d4251;box-shadow:inset 1px 1px 0 rgba(255,255,255,.26), inset -1px -1px 0 rgba(0,0,0,.2);"></div>
<div style="left:521.26px;top:169px;width:27.03px;height:9.6px;background:#3d4251;box-shadow:inset 1px 1px 0 rgba(255,255,255,.26), inset -1px -1px 0 rgba(0,0,0,.2);"></div>
<span style="left:519.77px;top:154px;width:30px;text-align:center;font-size:8.2px;color:#f2f2f2;">Fri</span>
<span style="left:519.77px;top:164px;width:30px;text-align:center;font-size:8.3px;color:#f2f2f2;">19</span>
<div style="left:549.29px;top:158.4px;width:27.03px;height:9.6px;background:#e6e6e6;box-shadow:inset 1px 1px 0 rgba(255,255,255,.26), inset -1px -1px 0 rgba(0,0,0,.2);"></div>
<div style="left:549.29px;top:169px;width:27.03px;height:9.6px;background:#e6e6e6;box-shadow:inset 1px 1px 0 rgba(255,255,255,.26), inset -1px -1px 0 rgba(0,0,0,.2);"></div>
<span style="left:547.8px;top:154px;width:30px;text-align:center;font-size:8.2px;color:#f7f7f7;">Sat</span>
<span style="left:547.8px;top:164px;width:30px;text-align:center;font-size:8.3px;color:#f7f7f7;">20</span>
<div style="left:577.32px;top:158.4px;width:27.03px;height:9.6px;background:#9c9c9c;box-shadow:inset 1px 1px 0 rgba(255,255,255,.26), inset -1px -1px 0 rgba(0,0,0,.2);"></div>
<div style="left:577.32px;top:169px;width:27.03px;height:9.6px;background:#9c9c9c;box-shadow:inset 1px 1px 0 rgba(255,255,255,.26), inset -1px -1px 0 rgba(0,0,0,.2);"></div>
<span style="left:575.84px;top:154px;width:30px;text-align:center;font-size:8.2px;color:#e6e6e6;">Sun</span>
<span style="left:575.84px;top:164px;width:30px;text-align:center;font-size:8.3px;color:#e6e6e6;">21</span>
<div style="left:605.35px;top:158.4px;width:27.03px;height:9.6px;background:#3d4251;box-shadow:inset 1px 1px 0 rgba(255,255,255,.26), inset -1px -1px 0 rgba(0,0,0,.2);"></div>
<div style="left:605.35px;top:169px;width:27.03px;height:9.6px;background:#3d4251;box-shadow:inset 1px 1px 0 rgba(255,255,255,.26), inset -1px -1px 0 rgba(0,0,0,.2);"></div>
<span style="left:603.87px;top:154px;width:30px;text-align:center;font-size:8.2px;color:#f2f2f2;">Mon</span>
<span style="left:603.87px;top:164px;width:30px;text-align:center;font-size:8.3px;color:#f2f2f2;">22</span>
<div style="left:633.38px;top:158.4px;width:27.03px;height:9.6px;background:#3d4251;box-shadow:inset 1px 1px 0 rgba(255,255,255,.26), inset -1px -1px 0 rgba(0,0,0,.2);"></div>
<div style="left:633.38px;top:169px;width:27.03px;height:9.6px;background:#3d4251;box-shadow:inset 1px 1px 0 rgba(255,255,255,.26), inset -1px -1px 0 rgba(0,0,0,.2);"></div>
<span style="left:631.89px;top:154px;width:30px;text-align:center;font-size:8.2px;color:#f2f2f2;">Tue</span>
<span style="left:631.89px;top:164px;width:30px;text-align:center;font-size:8.3px;color:#f2f2f2;">23</span>
<div style="left:661.41px;top:158.4px;width:27.03px;height:9.6px;background:#3d4251;box-shadow:inset 1px 1px 0 rgba(255,255,255,.26), inset -1px -1px 0 rgba(0,0,0,.2);"></div>
<div style="left:661.41px;top:169px;width:27.03px;height:9.6px;background:#3d4251;box-shadow:inset 1px 1px 0 rgba(255,255,255,.26), inset -1px -1px 0 rgba(0,0,0,.2);"></div>
<span style="left:659.92px;top:154px;width:30px;text-align:center;font-size:8.2px;color:#f2f2f2;">Wed</span>
<span style="left:659.92px;top:164px;width:30px;text-align:center;font-size:8.3px;color:#f2f2f2;">24</span>
<div style="left:689.44px;top:158.4px;width:27.03px;height:9.6px;background:#3d4251;box-shadow:inset 1px 1px 0 rgba(255,255,255,.26), inset -1px -1px 0 rgba(0,0,0,.2);"></div>
<div style="left:689.44px;top:169px;width:27.03px;height:9.6px;background:#3d4251;box-shadow:inset 1px 1px 0 rgba(255,255,255,.26), inset -1px -1px 0 rgba(0,0,0,.2);"></div>
<span style="left:687.95px;top:154px;width:30px;text-align:center;font-size:8.2px;color:#f2f2f2;">Thu</span>
<span style="left:687.95px;top:164px;width:30px;text-align:center;font-size:8.3px;color:#f2f2f2;">25</span>
<div style="left:717.47px;top:158.4px;width:27.03px;height:9.6px;background:#3d4251;box-shadow:inset 1px 1px 0 rgba(255,255,255,.26), inset -1px -1px 0 rgba(0,0,0,.2);"></div>
<div style="left:717.47px;top:169px;width:27.03px;height:9.6px;background:#3d4251;box-shadow:inset 1px 1px 0 rgba(255,255,255,.26), inset -1px -1px 0 rgba(0,0,0,.2);"></div>
<span style="left:715.98px;top:154px;width:30px;text-align:center;font-size:8.2px;color:#f2f2f2;">Fri</span>
<span style="left:715.98px;top:164px;width:30px;text-align:center;font-size:8.3px;color:#f2f2f2;">26</span>
<div style="left:745.5px;top:158.4px;width:27.03px;height:9.6px;background:#e6e6e6;box-shadow:inset 1px 1px 0 rgba(255,255,255,.26), inset -1px -1px 0 rgba(0,0,0,.2);"></div>
<div style="left:745.5px;top:169px;width:27.03px;height:9.6px;background:#e6e6e6;box-shadow:inset 1px 1px 0 rgba(255,255,255,.26), inset -1px -1px 0 rgba(0,0,0,.2);"></div>
<span style="left:744.01px;top:154px;width:30px;text-align:center;font-size:8.2px;color:#f7f7f7;">Sat</span>
<span style="left:744.01px;top:164px;width:30px;text-align:center;font-size:8.3px;color:#f7f7f7;">27</span>
<div style="left:773.53px;top:158.4px;width:27.03px;height:9.6px;background:#9c9c9c;box-shadow:inset 1px 1px 0 rgba(255,255,255,.26), inset -1px -1px 0 rgba(0,0,0,.2);"></div>
<div style="left:773.53px;top:169px;width:27.03px;height:9.6px;background:#9c9c9c;box-shadow:inset 1px 1px 0 rgba(255,255,255,.26), inset -1px -1px 0 rgba(0,0,0,.2);"></div>
<span style="left:772.04px;top:154px;width:30px;text-align:center;font-size:8.2px;color:#e6e6e6;">Sun</span>
<span style="left:772.04px;top:164px;width:30px;text-align:center;font-size:8.3px;color:#e6e6e6;">28</span>
<div style="left:801.56px;top:158.4px;width:27.03px;height:9.6px;background:#3d4251;box-shadow:inset 1px 1px 0 rgba(255,255,255,.26), inset -1px -1px 0 rgba(0,0,0,.2);"></div>
<div style="left:801.56px;top:169px;width:27.03px;height:9.6px;background:#3d4251;box-shadow:inset 1px 1px 0 rgba(255,255,255,.26), inset -1px -1px 0 rgba(0,0,0,.2);"></div>
<span style="left:800.08px;top:154px;width:30px;text-align:center;font-size:8.2px;color:#f2f2f2;">Mon</span>
<span style="left:800.08px;top:164px;width:30px;text-align:center;font-size:8.3px;color:#f2f2f2;">29</span>
<div style="left:829.59px;top:158.4px;width:27.03px;height:9.6px;background:#3d4251;box-shadow:inset 1px 1px 0 rgba(255,255,255,.26), inset -1px -1px 0 rgba(0,0,0,.2);"></div>
<div style="left:829.59px;top:169px;width:27.03px;height:9.6px;background:#3d4251;box-shadow:inset 1px 1px 0 rgba(255,255,255,.26), inset -1px -1px 0 rgba(0,0,0,.2);"></div>
<span style="left:828.11px;top:154px;width:30px;text-align:center;font-size:8.2px;color:#f2f2f2;">Tue</span>
<span style="left:828.11px;top:164px;width:30px;text-align:center;font-size:8.3px;color:#f2f2f2;">30</span>
<div style="left:857.62px;top:158.4px;width:27.03px;height:9.6px;background:#3d4251;box-shadow:inset 1px 1px 0 rgba(255,255,255,.26), inset -1px -1px 0 rgba(0,0,0,.2);"></div>
<div style="left:857.62px;top:169px;width:27.03px;height:9.6px;background:#3d4251;box-shadow:inset 1px 1px 0 rgba(255,255,255,.26), inset -1px -1px 0 rgba(0,0,0,.2);"></div>
<span style="left:856.13px;top:154px;width:30px;text-align:center;font-size:8.2px;color:#f2f2f2;">Wed</span>
<span style="left:856.13px;top:164px;width:30px;text-align:center;font-size:8.3px;color:#f2f2f2;">31</span>
<div style="left:885.65px;top:158.4px;width:27.03px;height:9.6px;background:#3d4251;box-shadow:inset 1px 1px 0 rgba(255,255,255,.26), inset -1px -1px 0 rgba(0,0,0,.2);"></div>
<div style="left:885.65px;top:169px;width:27.03px;height:9.6px;background:#3d4251;box-shadow:inset 1px 1px 0 rgba(255,255,255,.26), inset -1px -1px 0 rgba(0,0,0,.2);"></div>
<span style="left:884.16px;top:154px;width:30px;text-align:center;font-size:8.2px;color:#f2f2f2;">Thu</span>
<span style="left:884.16px;top:164px;width:30px;text-align:center;font-size:8.3px;color:#f2f2f2;">01</span>
<div style="left:913.68px;top:158.4px;width:27.03px;height:9.6px;background:#3d4251;box-shadow:inset 1px 1px 0 rgba(255,255,255,.26), inset -1px -1px 0 rgba(0,0,0,.2);"></div>
<div style="left:913.68px;top:169px;width:27.03px;height:9.6px;background:#3d4251;box-shadow:inset 1px 1px 0 rgba(255,255,255,.26), inset -1px -1px 0 rgba(0,0,0,.2);"></div>
<span style="left:912.19px;top:154px;width:30px;text-align:center;font-size:8.2px;color:#f2f2f2;">Fri</span>
<span style="left:912.19px;top:164px;width:30px;text-align:center;font-size:8.3px;color:#f2f2f2;">02</span>
<div style="left:941.71px;top:158.4px;width:27.03px;height:9.6px;background:#e6e6e6;box-shadow:inset 1px 1px 0 rgba(255,255,255,.26), inset -1px -1px 0 rgba(0,0,0,.2);"></div>
<div style="left:941.71px;top:169px;width:27.03px;height:9.6px;background:#e6e6e6;box-shadow:inset 1px 1px 0 rgba(255,255,255,.26), inset -1px -1px 0 rgba(0,0,0,.2);"></div>
<span style="left:940.23px;top:154px;width:30px;text-align:center;font-size:8.2px;color:#f7f7f7;">Sat</span>
<span style="left:940.23px;top:164px;width:30px;text-align:center;font-size:8.3px;color:#f7f7f7;">03</span>
<div style="left:969.74px;top:158.4px;width:27.03px;height:9.6px;background:#9c9c9c;box-shadow:inset 1px 1px 0 rgba(255,255,255,.26), inset -1px -1px 0 rgba(0,0,0,.2);"></div>
<div style="left:969.74px;top:169px;width:27.03px;height:9.6px;background:#9c9c9c;box-shadow:inset 1px 1px 0 rgba(255,255,255,.26), inset -1px -1px 0 rgba(0,0,0,.2);"></div>
<span style="left:968.25px;top:154px;width:30px;text-align:center;font-size:8.2px;color:#e6e6e6;">Sun</span>
<span style="left:968.25px;top:164px;width:30px;text-align:center;font-size:8.3px;color:#e6e6e6;">04</span>
<div style="left:997.77px;top:158.4px;width:27.03px;height:9.6px;background:#3d4251;box-shadow:inset 1px 1px 0 rgba(255,255,255,.26), inset -1px -1px 0 rgba(0,0,0,.2);"></div>
<div style="left:997.77px;top:169px;width:27.03px;height:9.6px;background:#3d4251;box-shadow:inset 1px 1px 0 rgba(255,255,255,.26), inset -1px -1px 0 rgba(0,0,0,.2);"></div>
<span style="left:996.29px;top:154px;width:30px;text-align:center;font-size:8.2px;color:#f2f2f2;">Mon</span>
<span style="left:996.29px;top:164px;width:30px;text-align:center;font-size:8.3px;color:#f2f2f2;">05</span>
<div style="left:1025.8px;top:158.4px;width:27.03px;height:9.6px;background:#3d4251;box-shadow:inset 1px 1px 0 rgba(255,255,255,.26), inset -1px -1px 0 rgba(0,0,0,.2);"></div>
<div style="left:1025.8px;top:169px;width:27.03px;height:9.6px;background:#3d4251;box-shadow:inset 1px 1px 0 rgba(255,255,255,.26), inset -1px -1px 0 rgba(0,0,0,.2);"></div>
<span style="left:1024.32px;top:154px;width:30px;text-align:center;font-size:8.2px;color:#f2f2f2;">Tue</span>
<span style="left:1024.32px;top:164px;width:30px;text-align:center;font-size:8.3px;color:#f2f2f2;">06</span>
<div style="left:1053.83px;top:158.4px;width:27.03px;height:9.6px;background:#3d4251;box-shadow:inset 1px 1px 0 rgba(255,255,255,.26), inset -1px -1px 0 rgba(0,0,0,.2);"></div>
<div style="left:1053.83px;top:169px;width:27.03px;height:9.6px;background:#3d4251;box-shadow:inset 1px 1px 0 rgba(255,255,255,.26), inset -1px -1px 0 rgba(0,0,0,.2);"></div>
<span style="left:1052.35px;top:154px;width:30px;text-align:center;font-size:8.2px;color:#f2f2f2;">Wed</span>
<span style="left:1052.35px;top:164px;width:30px;text-align:center;font-size:8.3px;color:#f2f2f2;">07</span>
<div style="left:1081.86px;top:158.4px;width:27.03px;height:9.6px;background:#3d4251;box-shadow:inset 1px 1px 0 rgba(255,255,255,.26), inset -1px -1px 0 rgba(0,0,0,.2);"></div>
<div style="left:1081.86px;top:169px;width:27.03px;height:9.6px;background:#3d4251;box-shadow:inset 1px 1px 0 rgba(255,255,255,.26), inset -1px -1px 0 rgba(0,0,0,.2);"></div>
<span style="left:1080.38px;top:154px;width:30px;text-align:center;font-size:8.2px;color:#f2f2f2;">Thu</span>
<span style="left:1080.38px;top:164px;width:30px;text-align:center;font-size:8.3px;color:#f2f2f2;">08</span>
<div style="left:1109.89px;top:158.4px;width:27.03px;height:9.6px;background:#3d4251;box-shadow:inset 1px 1px 0 rgba(255,255,255,.26), inset -1px -1px 0 rgba(0,0,0,.2);"></div>
<div style="left:1109.89px;top:169px;width:27.03px;height:9.6px;background:#3d4251;box-shadow:inset 1px 1px 0 rgba(255,255,255,.26), inset -1px -1px 0 rgba(0,0,0,.2);"></div>
<span style="left:1108.41px;top:154px;width:30px;text-align:center;font-size:8.2px;color:#f2f2f2;">Fri</span>
<span style="left:1108.41px;top:164px;width:30px;text-align:center;font-size:8.3px;color:#f2f2f2;">09</span>
<div style="left:1137.92px;top:158.4px;width:27.03px;height:9.6px;background:#e6e6e6;box-shadow:inset 1px 1px 0 rgba(255,255,255,.26), inset -1px -1px 0 rgba(0,0,0,.2);"></div>
<div style="left:1137.92px;top:169px;width:27.03px;height:9.6px;background:#e6e6e6;box-shadow:inset 1px 1px 0 rgba(255,255,255,.26), inset -1px -1px 0 rgba(0,0,0,.2);"></div>
<span style="left:1136.44px;top:154px;width:30px;text-align:center;font-size:8.2px;color:#f7f7f7;">Sat</span>
<span style="left:1136.44px;top:164px;width:30px;text-align:center;font-size:8.3px;color:#f7f7f7;">10</span>
<div style="left:1165.95px;top:158.4px;width:27.03px;height:9.6px;background:#9c9c9c;box-shadow:inset 1px 1px 0 rgba(255,255,255,.26), inset -1px -1px 0 rgba(0,0,0,.2);"></div>
<div style="left:1165.95px;top:169px;width:27.03px;height:9.6px;background:#9c9c9c;box-shadow:inset 1px 1px 0 rgba(255,255,255,.26), inset -1px -1px 0 rgba(0,0,0,.2);"></div>
<span style="left:1164.47px;top:154px;width:30px;text-align:center;font-size:8.2px;color:#e6e6e6;">Sun</span>
<span style="left:1164.47px;top:164px;width:30px;text-align:center;font-size:8.3px;color:#e6e6e6;">11</span>
<div style="left:323.2px;top:179.2px;width:873.8px;height:1.4px;background:#c4c8d0;"></div>
<div style="left:323.2px;top:180.6px;width:873.8px;height:1.8px;background:#f8f8f8;"></div>
<div style="left:323.2px;top:182.4px;width:873.8px;height:4.6px;background:linear-gradient(180deg,#e6e6e6,#b2b2b2);"></div>
<div style="left:326px;top:187px;width:868.5px;height:5.8px;background:#000;"></div>
<div style="left:324.6px;top:192.8px;width:870.9px;height:35px;background:#cdcdcd;"></div>
<div style="left:325.2px;top:194.2px;width:26.83px;height:15.1px;background:#ffffff;box-shadow:inset 1px 1px 0 #fff, inset -1px -1px 0 rgba(120,120,120,.55);"></div>
<span style="left:323.62px;top:195px;width:30px;text-align:center;font-size:10px;color:#111;font-weight:bold;letter-spacing:-0.25px;">301</span>
<div style="left:353.23px;top:194.2px;width:26.83px;height:15.1px;background:#ebebeb;box-shadow:inset 1px 1px 0 #fff, inset -1px -1px 0 rgba(120,120,120,.55);"></div>
<span style="left:351.64px;top:195px;width:30px;text-align:center;font-size:10px;color:#111;font-weight:bold;letter-spacing:-0.25px;">301</span>
<div style="left:381.26px;top:194.2px;width:26.83px;height:15.1px;background:#a1a1a1;box-shadow:inset 1px 1px 0 #fff, inset -1px -1px 0 rgba(120,120,120,.55);"></div>
<span style="left:379.68px;top:195px;width:30px;text-align:center;font-size:10px;color:#111;font-weight:bold;letter-spacing:-0.25px;">301</span>
<div style="left:409.29px;top:194.2px;width:26.83px;height:15.1px;background:#ffffff;box-shadow:inset 1px 1px 0 #fff, inset -1px -1px 0 rgba(120,120,120,.55);"></div>
<span style="left:407.71px;top:195px;width:30px;text-align:center;font-size:10px;color:#111;font-weight:bold;letter-spacing:-0.25px;">301</span>
<div style="left:437.32px;top:194.2px;width:26.83px;height:15.1px;background:#ffffff;box-shadow:inset 1px 1px 0 #fff, inset -1px -1px 0 rgba(120,120,120,.55);"></div>
<span style="left:435.74px;top:195px;width:30px;text-align:center;font-size:10px;color:#111;font-weight:bold;letter-spacing:-0.25px;">301</span>
<div style="left:465.35px;top:194.2px;width:26.83px;height:15.1px;background:#ffffff;box-shadow:inset 1px 1px 0 #fff, inset -1px -1px 0 rgba(120,120,120,.55);"></div>
<span style="left:463.76px;top:195px;width:30px;text-align:center;font-size:10px;color:#111;font-weight:bold;letter-spacing:-0.25px;">301</span>
<div style="left:493.38px;top:194.2px;width:26.83px;height:15.1px;background:#ffffff;box-shadow:inset 1px 1px 0 #fff, inset -1px -1px 0 rgba(120,120,120,.55);"></div>
<span style="left:491.8px;top:195px;width:30px;text-align:center;font-size:10px;color:#111;font-weight:bold;letter-spacing:-0.25px;">301</span>
<div style="left:521.41px;top:194.2px;width:26.83px;height:15.1px;background:#3d4251;box-shadow:inset 1px 1px 0 #fff, inset -1px -1px 0 #d0d0d0;"></div>
<span style="left:519.83px;top:195px;width:30px;text-align:center;font-size:10px;color:#fff;font-weight:bold;letter-spacing:-0.25px;">301</span>
<div style="left:549.44px;top:194.2px;width:26.83px;height:15.1px;background:#ebebeb;box-shadow:inset 1px 1px 0 #fff, inset -1px -1px 0 rgba(120,120,120,.55);"></div>
<span style="left:547.86px;top:195px;width:30px;text-align:center;font-size:10px;color:#111;font-weight:bold;letter-spacing:-0.25px;">301</span>
<div style="left:577.47px;top:194.2px;width:26.83px;height:15.1px;background:#a1a1a1;box-shadow:inset 1px 1px 0 #fff, inset -1px -1px 0 rgba(120,120,120,.55);"></div>
<span style="left:575.88px;top:195px;width:30px;text-align:center;font-size:10px;color:#111;font-weight:bold;letter-spacing:-0.25px;">301</span>
<div style="left:605.5px;top:194.2px;width:26.83px;height:15.1px;background:#ffffff;box-shadow:inset 1px 1px 0 #fff, inset -1px -1px 0 rgba(120,120,120,.55);"></div>
<span style="left:603.91px;top:195px;width:30px;text-align:center;font-size:10px;color:#111;font-weight:bold;letter-spacing:-0.25px;">301</span>
<div style="left:633.53px;top:194.2px;width:26.83px;height:15.1px;background:#ffffff;box-shadow:inset 1px 1px 0 #fff, inset -1px -1px 0 rgba(120,120,120,.55);"></div>
<span style="left:631.94px;top:195px;width:30px;text-align:center;font-size:10px;color:#111;font-weight:bold;letter-spacing:-0.25px;">301</span>
<div style="left:661.56px;top:194.2px;width:26.83px;height:15.1px;background:#ffffff;box-shadow:inset 1px 1px 0 #fff, inset -1px -1px 0 rgba(120,120,120,.55);"></div>
<span style="left:659.97px;top:195px;width:30px;text-align:center;font-size:10px;color:#111;font-weight:bold;letter-spacing:-0.25px;">301</span>
<div style="left:689.59px;top:194.2px;width:26.83px;height:15.1px;background:#ffffff;box-shadow:inset 1px 1px 0 #fff, inset -1px -1px 0 rgba(120,120,120,.55);"></div>
<span style="left:688px;top:195px;width:30px;text-align:center;font-size:10px;color:#111;font-weight:bold;letter-spacing:-0.25px;">301</span>
<div style="left:717.62px;top:194.2px;width:26.83px;height:15.1px;background:#ffffff;box-shadow:inset 1px 1px 0 #fff, inset -1px -1px 0 rgba(120,120,120,.55);"></div>
<span style="left:716.03px;top:195px;width:30px;text-align:center;font-size:10px;color:#111;font-weight:bold;letter-spacing:-0.25px;">301</span>
<div style="left:745.65px;top:194.2px;width:26.83px;height:15.1px;background:#ebebeb;box-shadow:inset 1px 1px 0 #fff, inset -1px -1px 0 rgba(120,120,120,.55);"></div>
<span style="left:744.07px;top:195px;width:30px;text-align:center;font-size:10px;color:#111;font-weight:bold;letter-spacing:-0.25px;">301</span>
<div style="left:773.68px;top:194.2px;width:26.83px;height:15.1px;background:#a1a1a1;box-shadow:inset 1px 1px 0 #fff, inset -1px -1px 0 rgba(120,120,120,.55);"></div>
<span style="left:772.1px;top:195px;width:30px;text-align:center;font-size:10px;color:#111;font-weight:bold;letter-spacing:-0.25px;">301</span>
<div style="left:801.71px;top:194.2px;width:26.83px;height:15.1px;background:#ffffff;box-shadow:inset 1px 1px 0 #fff, inset -1px -1px 0 rgba(120,120,120,.55);"></div>
<span style="left:800.12px;top:195px;width:30px;text-align:center;font-size:10px;color:#111;font-weight:bold;letter-spacing:-0.25px;">301</span>
<div style="left:829.74px;top:194.2px;width:26.83px;height:15.1px;background:#ffffff;box-shadow:inset 1px 1px 0 #fff, inset -1px -1px 0 rgba(120,120,120,.55);"></div>
<span style="left:828.15px;top:195px;width:30px;text-align:center;font-size:10px;color:#111;font-weight:bold;letter-spacing:-0.25px;">301</span>
<div style="left:857.77px;top:194.2px;width:26.83px;height:15.1px;background:#ffffff;box-shadow:inset 1px 1px 0 #fff, inset -1px -1px 0 rgba(120,120,120,.55);"></div>
<span style="left:856.18px;top:195px;width:30px;text-align:center;font-size:10px;color:#111;font-weight:bold;letter-spacing:-0.25px;">301</span>
<div style="left:885.8px;top:194.2px;width:26.83px;height:15.1px;background:#ffffff;box-shadow:inset 1px 1px 0 #fff, inset -1px -1px 0 rgba(120,120,120,.55);"></div>
<span style="left:884.21px;top:195px;width:30px;text-align:center;font-size:10px;color:#111;font-weight:bold;letter-spacing:-0.25px;">301</span>
<div style="left:913.83px;top:194.2px;width:26.83px;height:15.1px;background:#ffffff;box-shadow:inset 1px 1px 0 #fff, inset -1px -1px 0 rgba(120,120,120,.55);"></div>
<span style="left:912.25px;top:195px;width:30px;text-align:center;font-size:10px;color:#111;font-weight:bold;letter-spacing:-0.25px;">301</span>
<div style="left:941.86px;top:194.2px;width:26.83px;height:15.1px;background:#ebebeb;box-shadow:inset 1px 1px 0 #fff, inset -1px -1px 0 rgba(120,120,120,.55);"></div>
<span style="left:940.28px;top:195px;width:30px;text-align:center;font-size:10px;color:#111;font-weight:bold;letter-spacing:-0.25px;">301</span>
<div style="left:969.89px;top:194.2px;width:26.83px;height:15.1px;background:#a1a1a1;box-shadow:inset 1px 1px 0 #fff, inset -1px -1px 0 rgba(120,120,120,.55);"></div>
<span style="left:968.31px;top:195px;width:30px;text-align:center;font-size:10px;color:#111;font-weight:bold;letter-spacing:-0.25px;">301</span>
<div style="left:997.92px;top:194.2px;width:26.83px;height:15.1px;background:#ffffff;box-shadow:inset 1px 1px 0 #fff, inset -1px -1px 0 rgba(120,120,120,.55);"></div>
<span style="left:996.34px;top:195px;width:30px;text-align:center;font-size:10px;color:#111;font-weight:bold;letter-spacing:-0.25px;">301</span>
<div style="left:1025.95px;top:194.2px;width:26.83px;height:15.1px;background:#ffffff;box-shadow:inset 1px 1px 0 #fff, inset -1px -1px 0 rgba(120,120,120,.55);"></div>
<span style="left:1024.36px;top:195px;width:30px;text-align:center;font-size:10px;color:#111;font-weight:bold;letter-spacing:-0.25px;">301</span>
<div style="left:1053.98px;top:194.2px;width:26.83px;height:15.1px;background:#ffffff;box-shadow:inset 1px 1px 0 #fff, inset -1px -1px 0 rgba(120,120,120,.55);"></div>
<span style="left:1052.39px;top:195px;width:30px;text-align:center;font-size:10px;color:#111;font-weight:bold;letter-spacing:-0.25px;">301</span>
<div style="left:1082.01px;top:194.2px;width:26.83px;height:15.1px;background:#ffffff;box-shadow:inset 1px 1px 0 #fff, inset -1px -1px 0 rgba(120,120,120,.55);"></div>
<span style="left:1080.42px;top:195px;width:30px;text-align:center;font-size:10px;color:#111;font-weight:bold;letter-spacing:-0.25px;">301</span>
<div style="left:1110.04px;top:194.2px;width:26.83px;height:15.1px;background:#ffffff;box-shadow:inset 1px 1px 0 #fff, inset -1px -1px 0 rgba(120,120,120,.55);"></div>
<span style="left:1108.45px;top:195px;width:30px;text-align:center;font-size:10px;color:#111;font-weight:bold;letter-spacing:-0.25px;">301</span>
<div style="left:1138.07px;top:194.2px;width:26.83px;height:15.1px;background:#ebebeb;box-shadow:inset 1px 1px 0 #fff, inset -1px -1px 0 rgba(120,120,120,.55);"></div>
<span style="left:1136.49px;top:195px;width:30px;text-align:center;font-size:10px;color:#111;font-weight:bold;letter-spacing:-0.25px;">301</span>
<div style="left:1166.1px;top:194.2px;width:26.83px;height:15.1px;background:#a1a1a1;box-shadow:inset 1px 1px 0 #fff, inset -1px -1px 0 rgba(120,120,120,.55);"></div>
<span style="left:1164.51px;top:195px;width:30px;text-align:center;font-size:10px;color:#111;font-weight:bold;letter-spacing:-0.25px;">301</span>
<div style="left:325.2px;top:210.6px;width:26.83px;height:15.1px;background:#ffffff;box-shadow:inset 1px 1px 0 #fff, inset -1px -1px 0 rgba(120,120,120,.55);"></div>
<span style="left:323.62px;top:211px;width:30px;text-align:center;font-size:10px;color:#111;font-weight:bold;letter-spacing:-0.25px;">293</span>
<div style="left:353.23px;top:210.6px;width:26.83px;height:15.1px;background:#ebebeb;box-shadow:inset 1px 1px 0 #fff, inset -1px -1px 0 rgba(120,120,120,.55);"></div>
<span style="left:351.64px;top:211px;width:30px;text-align:center;font-size:10px;color:#111;font-weight:bold;letter-spacing:-0.25px;">295</span>
<div style="left:381.26px;top:210.6px;width:26.83px;height:15.1px;background:#a1a1a1;box-shadow:inset 1px 1px 0 #fff, inset -1px -1px 0 rgba(120,120,120,.55);"></div>
<span style="left:379.68px;top:211px;width:30px;text-align:center;font-size:10px;color:#111;font-weight:bold;letter-spacing:-0.25px;">297</span>
<div style="left:409.29px;top:210.6px;width:26.83px;height:15.1px;background:#ffffff;box-shadow:inset 1px 1px 0 #fff, inset -1px -1px 0 rgba(120,120,120,.55);"></div>
<span style="left:407.71px;top:211px;width:30px;text-align:center;font-size:10px;color:#111;font-weight:bold;letter-spacing:-0.25px;">284</span>
<div style="left:437.32px;top:210.6px;width:26.83px;height:15.1px;background:#ffffff;box-shadow:inset 1px 1px 0 #fff, inset -1px -1px 0 rgba(120,120,120,.55);"></div>
<span style="left:435.74px;top:211px;width:30px;text-align:center;font-size:10px;color:#111;font-weight:bold;letter-spacing:-0.25px;">284</span>
<div style="left:465.35px;top:210.6px;width:26.83px;height:15.1px;background:#ffffff;box-shadow:inset 1px 1px 0 #fff, inset -1px -1px 0 rgba(120,120,120,.55);"></div>
<span style="left:463.76px;top:211px;width:30px;text-align:center;font-size:10px;color:#111;font-weight:bold;letter-spacing:-0.25px;">286</span>
<div style="left:493.38px;top:210.6px;width:26.83px;height:15.1px;background:#ffffff;box-shadow:inset 1px 1px 0 #fff, inset -1px -1px 0 rgba(120,120,120,.55);"></div>
<span style="left:491.8px;top:211px;width:30px;text-align:center;font-size:10px;color:#111;font-weight:bold;letter-spacing:-0.25px;">284</span>
<div style="left:521.41px;top:210.6px;width:26.83px;height:15.1px;background:#3d4251;box-shadow:inset 1px 1px 0 #fff, inset -1px -1px 0 #d0d0d0;"></div>
<span style="left:519.83px;top:211px;width:30px;text-align:center;font-size:10px;color:#fff;font-weight:bold;letter-spacing:-0.25px;">284</span>
<div style="left:549.44px;top:210.6px;width:26.83px;height:15.1px;background:#ebebeb;box-shadow:inset 1px 1px 0 #fff, inset -1px -1px 0 rgba(120,120,120,.55);"></div>
<span style="left:547.86px;top:211px;width:30px;text-align:center;font-size:10px;color:#111;font-weight:bold;letter-spacing:-0.25px;">285</span>
<div style="left:577.47px;top:210.6px;width:26.83px;height:15.1px;background:#a1a1a1;box-shadow:inset 1px 1px 0 #fff, inset -1px -1px 0 rgba(120,120,120,.55);"></div>
<span style="left:575.88px;top:211px;width:30px;text-align:center;font-size:10px;color:#111;font-weight:bold;letter-spacing:-0.25px;">280</span>
<div style="left:605.5px;top:210.6px;width:26.83px;height:15.1px;background:#ffffff;box-shadow:inset 1px 1px 0 #fff, inset -1px -1px 0 rgba(120,120,120,.55);"></div>
<span style="left:603.91px;top:211px;width:30px;text-align:center;font-size:10px;color:#111;font-weight:bold;letter-spacing:-0.25px;">281</span>
<div style="left:633.53px;top:210.6px;width:26.83px;height:15.1px;background:#ffffff;box-shadow:inset 1px 1px 0 #fff, inset -1px -1px 0 rgba(120,120,120,.55);"></div>
<span style="left:631.94px;top:211px;width:30px;text-align:center;font-size:10px;color:#111;font-weight:bold;letter-spacing:-0.25px;">281</span>
<div style="left:661.56px;top:210.6px;width:26.83px;height:15.1px;background:#ffffff;box-shadow:inset 1px 1px 0 #fff, inset -1px -1px 0 rgba(120,120,120,.55);"></div>
<span style="left:659.97px;top:211px;width:30px;text-align:center;font-size:10px;color:#111;font-weight:bold;letter-spacing:-0.25px;">282</span>
<div style="left:689.59px;top:210.6px;width:26.83px;height:15.1px;background:#ffffff;box-shadow:inset 1px 1px 0 #fff, inset -1px -1px 0 rgba(120,120,120,.55);"></div>
<span style="left:688px;top:211px;width:30px;text-align:center;font-size:10px;color:#111;font-weight:bold;letter-spacing:-0.25px;">282</span>
<div style="left:717.62px;top:210.6px;width:26.83px;height:15.1px;background:#ffffff;box-shadow:inset 1px 1px 0 #fff, inset -1px -1px 0 rgba(120,120,120,.55);"></div>
<span style="left:716.03px;top:211px;width:30px;text-align:center;font-size:10px;color:#111;font-weight:bold;letter-spacing:-0.25px;">282</span>
<div style="left:745.65px;top:210.6px;width:26.83px;height:15.1px;background:#ebebeb;box-shadow:inset 1px 1px 0 #fff, inset -1px -1px 0 rgba(120,120,120,.55);"></div>
<span style="left:744.07px;top:211px;width:30px;text-align:center;font-size:10px;color:#111;font-weight:bold;letter-spacing:-0.25px;">282</span>
<div style="left:773.68px;top:210.6px;width:26.83px;height:15.1px;background:#a1a1a1;box-shadow:inset 1px 1px 0 #fff, inset -1px -1px 0 rgba(120,120,120,.55);"></div>
<span style="left:772.1px;top:211px;width:30px;text-align:center;font-size:10px;color:#111;font-weight:bold;letter-spacing:-0.25px;">288</span>
<div style="left:801.71px;top:210.6px;width:26.83px;height:15.1px;background:#ffffff;box-shadow:inset 1px 1px 0 #fff, inset -1px -1px 0 rgba(120,120,120,.55);"></div>
<span style="left:800.12px;top:211px;width:30px;text-align:center;font-size:10px;color:#111;font-weight:bold;letter-spacing:-0.25px;">288</span>
<div style="left:829.74px;top:210.6px;width:26.83px;height:15.1px;background:#ffffff;box-shadow:inset 1px 1px 0 #fff, inset -1px -1px 0 rgba(120,120,120,.55);"></div>
<span style="left:828.15px;top:211px;width:30px;text-align:center;font-size:10px;color:#111;font-weight:bold;letter-spacing:-0.25px;">288</span>
<div style="left:857.77px;top:210.6px;width:26.83px;height:15.1px;background:#ffffff;box-shadow:inset 1px 1px 0 #fff, inset -1px -1px 0 rgba(120,120,120,.55);"></div>
<span style="left:856.18px;top:211px;width:30px;text-align:center;font-size:10px;color:#111;font-weight:bold;letter-spacing:-0.25px;">301</span>
<div style="left:885.8px;top:210.6px;width:26.83px;height:15.1px;background:#ffffff;box-shadow:inset 1px 1px 0 #fff, inset -1px -1px 0 rgba(120,120,120,.55);"></div>
<span style="left:884.21px;top:211px;width:30px;text-align:center;font-size:10px;color:#111;font-weight:bold;letter-spacing:-0.25px;">301</span>
<div style="left:913.83px;top:210.6px;width:26.83px;height:15.1px;background:#ffffff;box-shadow:inset 1px 1px 0 #fff, inset -1px -1px 0 rgba(120,120,120,.55);"></div>
<span style="left:912.25px;top:211px;width:30px;text-align:center;font-size:10px;color:#111;font-weight:bold;letter-spacing:-0.25px;">301</span>
<div style="left:941.86px;top:210.6px;width:26.83px;height:15.1px;background:#ebebeb;box-shadow:inset 1px 1px 0 #fff, inset -1px -1px 0 rgba(120,120,120,.55);"></div>
<span style="left:940.28px;top:211px;width:30px;text-align:center;font-size:10px;color:#111;font-weight:bold;letter-spacing:-0.25px;">301</span>
<div style="left:969.89px;top:210.6px;width:26.83px;height:15.1px;background:#a1a1a1;box-shadow:inset 1px 1px 0 #fff, inset -1px -1px 0 rgba(120,120,120,.55);"></div>
<span style="left:968.31px;top:211px;width:30px;text-align:center;font-size:10px;color:#111;font-weight:bold;letter-spacing:-0.25px;">301</span>
<div style="left:997.92px;top:210.6px;width:26.83px;height:15.1px;background:#ffffff;box-shadow:inset 1px 1px 0 #fff, inset -1px -1px 0 rgba(120,120,120,.55);"></div>
<span style="left:996.34px;top:211px;width:30px;text-align:center;font-size:10px;color:#111;font-weight:bold;letter-spacing:-0.25px;">301</span>
<div style="left:1025.95px;top:210.6px;width:26.83px;height:15.1px;background:#ffffff;box-shadow:inset 1px 1px 0 #fff, inset -1px -1px 0 rgba(120,120,120,.55);"></div>
<span style="left:1024.36px;top:211px;width:30px;text-align:center;font-size:10px;color:#111;font-weight:bold;letter-spacing:-0.25px;">301</span>
<div style="left:1053.98px;top:210.6px;width:26.83px;height:15.1px;background:#ffffff;box-shadow:inset 1px 1px 0 #fff, inset -1px -1px 0 rgba(120,120,120,.55);"></div>
<span style="left:1052.39px;top:211px;width:30px;text-align:center;font-size:10px;color:#111;font-weight:bold;letter-spacing:-0.25px;">301</span>
<div style="left:1082.01px;top:210.6px;width:26.83px;height:15.1px;background:#ffffff;box-shadow:inset 1px 1px 0 #fff, inset -1px -1px 0 rgba(120,120,120,.55);"></div>
<span style="left:1080.42px;top:211px;width:30px;text-align:center;font-size:10px;color:#111;font-weight:bold;letter-spacing:-0.25px;">301</span>
<div style="left:1110.04px;top:210.6px;width:26.83px;height:15.1px;background:#ffffff;box-shadow:inset 1px 1px 0 #fff, inset -1px -1px 0 rgba(120,120,120,.55);"></div>
<span style="left:1108.45px;top:211px;width:30px;text-align:center;font-size:10px;color:#111;font-weight:bold;letter-spacing:-0.25px;">301</span>
<div style="left:1138.07px;top:210.6px;width:26.83px;height:15.1px;background:#ebebeb;box-shadow:inset 1px 1px 0 #fff, inset -1px -1px 0 rgba(120,120,120,.55);"></div>
<span style="left:1136.49px;top:211px;width:30px;text-align:center;font-size:10px;color:#111;font-weight:bold;letter-spacing:-0.25px;">301</span>
<div style="left:1166.1px;top:210.6px;width:26.83px;height:15.1px;background:#a1a1a1;box-shadow:inset 1px 1px 0 #fff, inset -1px -1px 0 rgba(120,120,120,.55);"></div>
<span style="left:1164.51px;top:211px;width:30px;text-align:center;font-size:10px;color:#111;font-weight:bold;letter-spacing:-0.25px;">301</span>
<div style="left:324.6px;top:227.8px;width:870.9px;height:13.4px;background:#8a8f9b;"></div>
<div style="left:326.6px;top:228.4px;width:867.9px;height:12.4px;background:#3d4251;"></div>
<div style="left:324.6px;top:241.2px;width:870.9px;height:3.4px;background:linear-gradient(180deg,#cfcfcf,#f0f0f0);"></div>
<div style="left:324px;top:244px;width:870.2px;height:183.2px;overflow:hidden;background:#4b505e;">
<div style="left:0px;top:0px;width:870.5px;height:0.6px;background:#e8e8e8;"></div>
<div style="left:1px;top:0.6px;width:27.15px;height:15.55px;background:#c2c2c2;"></div>
<span style="left:-0.43px;top:1px;width:30px;text-align:center;font-size:9.5px;color:#262626;">100</span>
<div style="left:29px;top:0.6px;width:27.15px;height:15.55px;background:#ebebeb;"></div>
<span style="left:27.57px;top:1px;width:30px;text-align:center;font-size:9.5px;color:#262626;">100</span>
<div style="left:57px;top:0.6px;width:27.15px;height:15.55px;background:#a1a1a1;"></div>
<span style="left:55.57px;top:1px;width:30px;text-align:center;font-size:9.5px;color:#262626;">100</span>
<div style="left:85px;top:0.6px;width:27.15px;height:15.55px;background:#c2c2c2;"></div>
<span style="left:83.57px;top:1px;width:30px;text-align:center;font-size:9.5px;color:#262626;">100</span>
<div style="left:113px;top:0.6px;width:27.15px;height:15.55px;background:#c2c2c2;"></div>
<span style="left:111.57px;top:1px;width:30px;text-align:center;font-size:9.5px;color:#262626;">100</span>
<div style="left:141px;top:0.6px;width:27.15px;height:15.55px;background:#c2c2c2;"></div>
<span style="left:139.57px;top:1px;width:30px;text-align:center;font-size:9.5px;color:#262626;">100</span>
<div style="left:169px;top:0.6px;width:27.15px;height:15.55px;background:#c2c2c2;"></div>
<span style="left:167.57px;top:1px;width:30px;text-align:center;font-size:9.5px;color:#262626;">100</span>
<div style="left:197px;top:0.6px;width:27.15px;height:15.55px;background:#3d4251;"></div>
<span style="left:195.58px;top:1px;width:30px;text-align:center;font-size:9.5px;color:#ececec;">100</span>
<div style="left:225px;top:0.6px;width:27.15px;height:15.55px;background:#ebebeb;"></div>
<span style="left:223.58px;top:1px;width:30px;text-align:center;font-size:9.5px;color:#262626;">100</span>
<div style="left:253px;top:0.6px;width:27.15px;height:15.55px;background:#a1a1a1;"></div>
<span style="left:251.58px;top:1px;width:30px;text-align:center;font-size:9.5px;color:#262626;">100</span>
<div style="left:281px;top:0.6px;width:27.15px;height:15.55px;background:#c2c2c2;"></div>
<span style="left:279.58px;top:1px;width:30px;text-align:center;font-size:9.5px;color:#262626;">100</span>
<div style="left:309px;top:0.6px;width:27.15px;height:15.55px;background:#c2c2c2;"></div>
<span style="left:307.58px;top:1px;width:30px;text-align:center;font-size:9.5px;color:#262626;">100</span>
<div style="left:337px;top:0.6px;width:27.15px;height:15.55px;background:#c2c2c2;"></div>
<span style="left:335.58px;top:1px;width:30px;text-align:center;font-size:9.5px;color:#262626;">100</span>
<div style="left:365px;top:0.6px;width:27.15px;height:15.55px;background:#c2c2c2;"></div>
<span style="left:363.58px;top:1px;width:30px;text-align:center;font-size:9.5px;color:#262626;">100</span>
<div style="left:393px;top:0.6px;width:27.15px;height:15.55px;background:#c2c2c2;"></div>
<span style="left:391.58px;top:1px;width:30px;text-align:center;font-size:9.5px;color:#262626;">100</span>
<div style="left:421px;top:0.6px;width:27.15px;height:15.55px;background:#ebebeb;"></div>
<span style="left:419.58px;top:1px;width:30px;text-align:center;font-size:9.5px;color:#262626;">100</span>
<div style="left:449px;top:0.6px;width:27.15px;height:15.55px;background:#a1a1a1;"></div>
<span style="left:447.58px;top:1px;width:30px;text-align:center;font-size:9.5px;color:#262626;">100</span>
<div style="left:477px;top:0.6px;width:27.15px;height:15.55px;background:#c2c2c2;"></div>
<span style="left:475.58px;top:1px;width:30px;text-align:center;font-size:9.5px;color:#262626;">100</span>
<div style="left:505px;top:0.6px;width:27.15px;height:15.55px;background:#c2c2c2;"></div>
<span style="left:503.58px;top:1px;width:30px;text-align:center;font-size:9.5px;color:#262626;">100</span>
<div style="left:533px;top:0.6px;width:28.15px;height:15.55px;background:#c2c2c2;"></div>
<span style="left:532.08px;top:1px;width:30px;text-align:center;font-size:9.5px;color:#262626;">100</span>
<div style="left:562px;top:0.6px;width:27.15px;height:15.55px;background:#c2c2c2;"></div>
<span style="left:560.58px;top:1px;width:30px;text-align:center;font-size:9.5px;color:#262626;">100</span>
<div style="left:590px;top:0.6px;width:27.15px;height:15.55px;background:#c2c2c2;"></div>
<span style="left:588.58px;top:1px;width:30px;text-align:center;font-size:9.5px;color:#262626;">100</span>
<div style="left:618px;top:0.6px;width:27.15px;height:15.55px;background:#ebebeb;"></div>
<span style="left:616.58px;top:1px;width:30px;text-align:center;font-size:9.5px;color:#262626;">100</span>
<div style="left:646px;top:0.6px;width:27.15px;height:15.55px;background:#a1a1a1;"></div>
<span style="left:644.58px;top:1px;width:30px;text-align:center;font-size:9.5px;color:#262626;">100</span>
<div style="left:674px;top:0.6px;width:27.15px;height:15.55px;background:#c2c2c2;"></div>
<span style="left:672.58px;top:1px;width:30px;text-align:center;font-size:9.5px;color:#262626;">100</span>
<div style="left:702px;top:0.6px;width:27.15px;height:15.55px;background:#c2c2c2;"></div>
<span style="left:700.58px;top:1px;width:30px;text-align:center;font-size:9.5px;color:#262626;">100</span>
<div style="left:730px;top:0.6px;width:27.15px;height:15.55px;background:#c2c2c2;"></div>
<span style="left:728.58px;top:1px;width:30px;text-align:center;font-size:9.5px;color:#262626;">100</span>
<div style="left:758px;top:0.6px;width:27.15px;height:15.55px;background:#c2c2c2;"></div>
<span style="left:756.58px;top:1px;width:30px;text-align:center;font-size:9.5px;color:#262626;">100</span>
<div style="left:786px;top:0.6px;width:27.15px;height:15.55px;background:#c2c2c2;"></div>
<span style="left:784.58px;top:1px;width:30px;text-align:center;font-size:9.5px;color:#262626;">100</span>
<div style="left:814px;top:0.6px;width:27.15px;height:15.55px;background:#ebebeb;"></div>
<span style="left:812.58px;top:1px;width:30px;text-align:center;font-size:9.5px;color:#262626;">100</span>
<div style="left:842px;top:0.6px;width:27.15px;height:15.55px;background:#a1a1a1;"></div>
<span style="left:840.58px;top:1px;width:30px;text-align:center;font-size:9.5px;color:#262626;">100</span>
<div style="left:1px;top:17px;width:27.15px;height:15.15px;background:#c2c2c2;"></div>
<span style="left:-0.43px;top:17px;width:30px;text-align:center;font-size:9.5px;color:#262626;">60</span>
<div style="left:29px;top:17px;width:27.15px;height:15.15px;background:#ebebeb;"></div>
<span style="left:27.57px;top:17px;width:30px;text-align:center;font-size:9.5px;color:#262626;">60</span>
<div style="left:57px;top:17px;width:27.15px;height:15.15px;background:#a1a1a1;"></div>
<span style="left:55.57px;top:17px;width:30px;text-align:center;font-size:9.5px;color:#262626;">60</span>
<div style="left:85px;top:17px;width:27.15px;height:15.15px;background:#c2c2c2;"></div>
<span style="left:83.57px;top:17px;width:30px;text-align:center;font-size:9.5px;color:#262626;">60</span>
<div style="left:113px;top:17px;width:27.15px;height:15.15px;background:#c2c2c2;"></div>
<span style="left:111.57px;top:17px;width:30px;text-align:center;font-size:9.5px;color:#262626;">60</span>
<div style="left:141px;top:17px;width:27.15px;height:15.15px;background:#c2c2c2;"></div>
<span style="left:139.57px;top:17px;width:30px;text-align:center;font-size:9.5px;color:#262626;">60</span>
<div style="left:169px;top:17px;width:27.15px;height:15.15px;background:#c2c2c2;"></div>
<span style="left:167.57px;top:17px;width:30px;text-align:center;font-size:9.5px;color:#262626;">60</span>
<div style="left:197px;top:17px;width:27.15px;height:15.15px;background:#3d4251;"></div>
<span style="left:195.58px;top:17px;width:30px;text-align:center;font-size:9.5px;color:#ececec;">60</span>
<div style="left:225px;top:17px;width:27.15px;height:15.15px;background:#ebebeb;"></div>
<span style="left:223.58px;top:17px;width:30px;text-align:center;font-size:9.5px;color:#262626;">60</span>
<div style="left:253px;top:17px;width:27.15px;height:15.15px;background:#a1a1a1;"></div>
<span style="left:251.58px;top:17px;width:30px;text-align:center;font-size:9.5px;color:#262626;">54</span>
<div style="left:281px;top:17px;width:27.15px;height:15.15px;background:#c2c2c2;"></div>
<span style="left:279.58px;top:17px;width:30px;text-align:center;font-size:9.5px;color:#262626;">54</span>
<div style="left:309px;top:17px;width:27.15px;height:15.15px;background:#c2c2c2;"></div>
<span style="left:307.58px;top:17px;width:30px;text-align:center;font-size:9.5px;color:#262626;">54</span>
<div style="left:337px;top:17px;width:27.15px;height:15.15px;background:#c2c2c2;"></div>
<span style="left:335.58px;top:17px;width:30px;text-align:center;font-size:9.5px;color:#262626;">54</span>
<div style="left:365px;top:17px;width:27.15px;height:15.15px;background:#c2c2c2;"></div>
<span style="left:363.58px;top:17px;width:30px;text-align:center;font-size:9.5px;color:#262626;">54</span>
<div style="left:393px;top:17px;width:27.15px;height:15.15px;background:#c2c2c2;"></div>
<span style="left:391.58px;top:17px;width:30px;text-align:center;font-size:9.5px;color:#262626;">54</span>
<div style="left:421px;top:17px;width:27.15px;height:15.15px;background:#ebebeb;"></div>
<span style="left:419.58px;top:17px;width:30px;text-align:center;font-size:9.5px;color:#262626;">54</span>
<div style="left:449px;top:17px;width:27.15px;height:15.15px;background:#a1a1a1;"></div>
<span style="left:447.58px;top:17px;width:30px;text-align:center;font-size:9.5px;color:#262626;">60</span>
<div style="left:477px;top:17px;width:27.15px;height:15.15px;background:#c2c2c2;"></div>
<span style="left:475.58px;top:17px;width:30px;text-align:center;font-size:9.5px;color:#262626;">60</span>
<div style="left:505px;top:17px;width:27.15px;height:15.15px;background:#c2c2c2;"></div>
<span style="left:503.58px;top:17px;width:30px;text-align:center;font-size:9.5px;color:#262626;">60</span>
<div style="left:533px;top:17px;width:28.15px;height:15.15px;background:#c2c2c2;"></div>
<span style="left:532.08px;top:17px;width:30px;text-align:center;font-size:9.5px;color:#262626;">60</span>
<div style="left:562px;top:17px;width:27.15px;height:15.15px;background:#c2c2c2;"></div>
<span style="left:560.58px;top:17px;width:30px;text-align:center;font-size:9.5px;color:#262626;">60</span>
<div style="left:590px;top:17px;width:27.15px;height:15.15px;background:#c2c2c2;"></div>
<span style="left:588.58px;top:17px;width:30px;text-align:center;font-size:9.5px;color:#262626;">60</span>
<div style="left:618px;top:17px;width:27.15px;height:15.15px;background:#ebebeb;"></div>
<span style="left:616.58px;top:17px;width:30px;text-align:center;font-size:9.5px;color:#262626;">60</span>
<div style="left:646px;top:17px;width:27.15px;height:15.15px;background:#a1a1a1;"></div>
<span style="left:644.58px;top:17px;width:30px;text-align:center;font-size:9.5px;color:#262626;">60</span>
<div style="left:674px;top:17px;width:27.15px;height:15.15px;background:#c2c2c2;"></div>
<span style="left:672.58px;top:17px;width:30px;text-align:center;font-size:9.5px;color:#262626;">60</span>
<div style="left:702px;top:17px;width:27.15px;height:15.15px;background:#c2c2c2;"></div>
<span style="left:700.58px;top:17px;width:30px;text-align:center;font-size:9.5px;color:#262626;">60</span>
<div style="left:730px;top:17px;width:27.15px;height:15.15px;background:#c2c2c2;"></div>
<span style="left:728.58px;top:17px;width:30px;text-align:center;font-size:9.5px;color:#262626;">60</span>
<div style="left:758px;top:17px;width:27.15px;height:15.15px;background:#c2c2c2;"></div>
<span style="left:756.58px;top:17px;width:30px;text-align:center;font-size:9.5px;color:#262626;">60</span>
<div style="left:786px;top:17px;width:27.15px;height:15.15px;background:#c2c2c2;"></div>
<span style="left:784.58px;top:17px;width:30px;text-align:center;font-size:9.5px;color:#262626;">60</span>
<div style="left:814px;top:17px;width:27.15px;height:15.15px;background:#ebebeb;"></div>
<span style="left:812.58px;top:17px;width:30px;text-align:center;font-size:9.5px;color:#262626;">60</span>
<div style="left:842px;top:17px;width:27.15px;height:15.15px;background:#a1a1a1;"></div>
<span style="left:840.58px;top:17px;width:30px;text-align:center;font-size:9.5px;color:#262626;">60</span>
<div style="left:1px;top:33px;width:27.15px;height:15.15px;background:#fcfefe;"></div>
<div style="left:29px;top:33px;width:27.15px;height:15.15px;background:#ebebeb;"></div>
<div style="left:57px;top:33px;width:27.15px;height:15.15px;background:#a1a1a1;"></div>
<div style="left:85px;top:33px;width:27.15px;height:15.15px;background:#fcfefe;"></div>
<div style="left:113px;top:33px;width:27.15px;height:15.15px;background:#fcfefe;"></div>
<div style="left:141px;top:33px;width:27.15px;height:15.15px;background:#fcfefe;"></div>
<div style="left:169px;top:33px;width:27.15px;height:15.15px;background:#fcfefe;"></div>
<div style="left:197px;top:33px;width:27.15px;height:15.15px;background:#3d4251;"></div>
<div style="left:225px;top:33px;width:27.15px;height:15.15px;background:#ebebeb;"></div>
<div style="left:253px;top:33px;width:27.15px;height:15.15px;background:#a1a1a1;"></div>
<div style="left:281px;top:33px;width:27.15px;height:15.15px;background:#fcfefe;"></div>
<div style="left:309px;top:33px;width:27.15px;height:15.15px;background:#fcfefe;"></div>
<div style="left:337px;top:33px;width:27.15px;height:15.15px;background:#fcfefe;"></div>
<div style="left:365px;top:33px;width:27.15px;height:15.15px;background:#fcfefe;"></div>
<div style="left:393px;top:33px;width:27.15px;height:15.15px;background:#fcfefe;"></div>
<div style="left:421px;top:33px;width:27.15px;height:15.15px;background:#ebebeb;"></div>
<div style="left:449px;top:33px;width:27.15px;height:15.15px;background:#a1a1a1;"></div>
<div style="left:477px;top:33px;width:27.15px;height:15.15px;background:#fcfefe;"></div>
<div style="left:505px;top:33px;width:27.15px;height:15.15px;background:#fcfefe;"></div>
<div style="left:533px;top:33px;width:28.15px;height:15.15px;background:#fcfefe;"></div>
<div style="left:562px;top:33px;width:27.15px;height:15.15px;background:#fcfefe;"></div>
<div style="left:590px;top:33px;width:27.15px;height:15.15px;background:#fcfefe;"></div>
<div style="left:618px;top:33px;width:27.15px;height:15.15px;background:#ebebeb;"></div>
<div style="left:646px;top:33px;width:27.15px;height:15.15px;background:#a1a1a1;"></div>
<div style="left:674px;top:33px;width:27.15px;height:15.15px;background:#fcfefe;"></div>
<div style="left:702px;top:33px;width:27.15px;height:15.15px;background:#fcfefe;"></div>
<div style="left:730px;top:33px;width:27.15px;height:15.15px;background:#fcfefe;"></div>
<div style="left:758px;top:33px;width:27.15px;height:15.15px;background:#fcfefe;"></div>
<div style="left:786px;top:33px;width:27.15px;height:15.15px;background:#fcfefe;"></div>
<div style="left:814px;top:33px;width:27.15px;height:15.15px;background:#ebebeb;"></div>
<div style="left:842px;top:33px;width:27.15px;height:15.15px;background:#a1a1a1;"></div>
<div style="left:1px;top:49px;width:27.15px;height:15.15px;background:#c2c2c2;"></div>
<span style="left:-0.43px;top:49px;width:30px;text-align:center;font-size:9.5px;color:#262626;">50</span>
<div style="left:29px;top:49px;width:27.15px;height:15.15px;background:#ebebeb;"></div>
<span style="left:27.57px;top:49px;width:30px;text-align:center;font-size:9.5px;color:#262626;">50</span>
<div style="left:57px;top:49px;width:27.15px;height:15.15px;background:#a1a1a1;"></div>
<span style="left:55.57px;top:49px;width:30px;text-align:center;font-size:9.5px;color:#262626;">50</span>
<div style="left:85px;top:49px;width:27.15px;height:15.15px;background:#c2c2c2;"></div>
<span style="left:83.57px;top:49px;width:30px;text-align:center;font-size:9.5px;color:#262626;">50</span>
<div style="left:113px;top:49px;width:27.15px;height:15.15px;background:#c2c2c2;"></div>
<span style="left:111.57px;top:49px;width:30px;text-align:center;font-size:9.5px;color:#262626;">50</span>
<div style="left:141px;top:49px;width:27.15px;height:15.15px;background:#c2c2c2;"></div>
<span style="left:139.57px;top:49px;width:30px;text-align:center;font-size:9.5px;color:#262626;">50</span>
<div style="left:169px;top:49px;width:27.15px;height:15.15px;background:#c2c2c2;"></div>
<span style="left:167.57px;top:49px;width:30px;text-align:center;font-size:9.5px;color:#262626;">50</span>
<div style="left:197px;top:49px;width:27.15px;height:15.15px;background:#3d4251;"></div>
<span style="left:195.58px;top:49px;width:30px;text-align:center;font-size:9.5px;color:#ececec;">50</span>
<div style="left:225px;top:49px;width:27.15px;height:15.15px;background:#ebebeb;"></div>
<span style="left:223.58px;top:49px;width:30px;text-align:center;font-size:9.5px;color:#262626;">50</span>
<div style="left:253px;top:49px;width:27.15px;height:15.15px;background:#a1a1a1;"></div>
<span style="left:251.58px;top:49px;width:30px;text-align:center;font-size:9.5px;color:#262626;">50</span>
<div style="left:281px;top:49px;width:27.15px;height:15.15px;background:#c2c2c2;"></div>
<span style="left:279.58px;top:49px;width:30px;text-align:center;font-size:9.5px;color:#262626;">50</span>
<div style="left:309px;top:49px;width:27.15px;height:15.15px;background:#c2c2c2;"></div>
<span style="left:307.58px;top:49px;width:30px;text-align:center;font-size:9.5px;color:#262626;">50</span>
<div style="left:337px;top:49px;width:27.15px;height:15.15px;background:#c2c2c2;"></div>
<span style="left:335.58px;top:49px;width:30px;text-align:center;font-size:9.5px;color:#262626;">50</span>
<div style="left:365px;top:49px;width:27.15px;height:15.15px;background:#c2c2c2;"></div>
<span style="left:363.58px;top:49px;width:30px;text-align:center;font-size:9.5px;color:#262626;">50</span>
<div style="left:393px;top:49px;width:27.15px;height:15.15px;background:#c2c2c2;"></div>
<span style="left:391.58px;top:49px;width:30px;text-align:center;font-size:9.5px;color:#262626;">50</span>
<div style="left:421px;top:49px;width:27.15px;height:15.15px;background:#ebebeb;"></div>
<span style="left:419.58px;top:49px;width:30px;text-align:center;font-size:9.5px;color:#262626;">50</span>
<div style="left:449px;top:49px;width:27.15px;height:15.15px;background:#a1a1a1;"></div>
<span style="left:447.58px;top:49px;width:30px;text-align:center;font-size:9.5px;color:#262626;">50</span>
<div style="left:477px;top:49px;width:27.15px;height:15.15px;background:#c2c2c2;"></div>
<span style="left:475.58px;top:49px;width:30px;text-align:center;font-size:9.5px;color:#262626;">50</span>
<div style="left:505px;top:49px;width:27.15px;height:15.15px;background:#c2c2c2;"></div>
<span style="left:503.58px;top:49px;width:30px;text-align:center;font-size:9.5px;color:#262626;">50</span>
<div style="left:533px;top:49px;width:28.15px;height:15.15px;background:#c2c2c2;"></div>
<span style="left:532.08px;top:49px;width:30px;text-align:center;font-size:9.5px;color:#262626;">50</span>
<div style="left:562px;top:49px;width:27.15px;height:15.15px;background:#c2c2c2;"></div>
<span style="left:560.58px;top:49px;width:30px;text-align:center;font-size:9.5px;color:#262626;">50</span>
<div style="left:590px;top:49px;width:27.15px;height:15.15px;background:#c2c2c2;"></div>
<span style="left:588.58px;top:49px;width:30px;text-align:center;font-size:9.5px;color:#262626;">50</span>
<div style="left:618px;top:49px;width:27.15px;height:15.15px;background:#ebebeb;"></div>
<span style="left:616.58px;top:49px;width:30px;text-align:center;font-size:9.5px;color:#262626;">50</span>
<div style="left:646px;top:49px;width:27.15px;height:15.15px;background:#a1a1a1;"></div>
<span style="left:644.58px;top:49px;width:30px;text-align:center;font-size:9.5px;color:#262626;">50</span>
<div style="left:674px;top:49px;width:27.15px;height:15.15px;background:#c2c2c2;"></div>
<span style="left:672.58px;top:49px;width:30px;text-align:center;font-size:9.5px;color:#262626;">50</span>
<div style="left:702px;top:49px;width:27.15px;height:15.15px;background:#c2c2c2;"></div>
<span style="left:700.58px;top:49px;width:30px;text-align:center;font-size:9.5px;color:#262626;">50</span>
<div style="left:730px;top:49px;width:27.15px;height:15.15px;background:#c2c2c2;"></div>
<span style="left:728.58px;top:49px;width:30px;text-align:center;font-size:9.5px;color:#262626;">50</span>
<div style="left:758px;top:49px;width:27.15px;height:15.15px;background:#c2c2c2;"></div>
<span style="left:756.58px;top:49px;width:30px;text-align:center;font-size:9.5px;color:#262626;">50</span>
<div style="left:786px;top:49px;width:27.15px;height:15.15px;background:#c2c2c2;"></div>
<span style="left:784.58px;top:49px;width:30px;text-align:center;font-size:9.5px;color:#262626;">50</span>
<div style="left:814px;top:49px;width:27.15px;height:15.15px;background:#ebebeb;"></div>
<span style="left:812.58px;top:49px;width:30px;text-align:center;font-size:9.5px;color:#262626;">50</span>
<div style="left:842px;top:49px;width:27.15px;height:15.15px;background:#a1a1a1;"></div>
<span style="left:840.58px;top:49px;width:30px;text-align:center;font-size:9.5px;color:#262626;">50</span>
<div style="left:1px;top:65px;width:27.15px;height:15.15px;background:#c2c2c2;"></div>
<span style="left:-0.43px;top:65px;width:30px;text-align:center;font-size:9.5px;color:#262626;">40</span>
<div style="left:29px;top:65px;width:27.15px;height:15.15px;background:#ebebeb;"></div>
<span style="left:27.57px;top:65px;width:30px;text-align:center;font-size:9.5px;color:#262626;">40</span>
<div style="left:57px;top:65px;width:27.15px;height:15.15px;background:#a1a1a1;"></div>
<span style="left:55.57px;top:65px;width:30px;text-align:center;font-size:9.5px;color:#262626;">40</span>
<div style="left:85px;top:65px;width:27.15px;height:15.15px;background:#c2c2c2;"></div>
<span style="left:83.57px;top:65px;width:30px;text-align:center;font-size:9.5px;color:#262626;">40</span>
<div style="left:113px;top:65px;width:27.15px;height:15.15px;background:#c2c2c2;"></div>
<span style="left:111.57px;top:65px;width:30px;text-align:center;font-size:9.5px;color:#262626;">40</span>
<div style="left:141px;top:65px;width:27.15px;height:15.15px;background:#c2c2c2;"></div>
<span style="left:139.57px;top:65px;width:30px;text-align:center;font-size:9.5px;color:#262626;">40</span>
<div style="left:169px;top:65px;width:27.15px;height:15.15px;background:#c2c2c2;"></div>
<span style="left:167.57px;top:65px;width:30px;text-align:center;font-size:9.5px;color:#262626;">40</span>
<div style="left:197px;top:65px;width:27.15px;height:15.15px;background:#3d4251;"></div>
<span style="left:195.58px;top:65px;width:30px;text-align:center;font-size:9.5px;color:#ececec;">40</span>
<div style="left:225px;top:65px;width:27.15px;height:15.15px;background:#ebebeb;"></div>
<span style="left:223.58px;top:65px;width:30px;text-align:center;font-size:9.5px;color:#262626;">40</span>
<div style="left:253px;top:65px;width:27.15px;height:15.15px;background:#a1a1a1;"></div>
<span style="left:251.58px;top:65px;width:30px;text-align:center;font-size:9.5px;color:#262626;">40</span>
<div style="left:281px;top:65px;width:27.15px;height:15.15px;background:#c2c2c2;"></div>
<span style="left:279.58px;top:65px;width:30px;text-align:center;font-size:9.5px;color:#262626;">40</span>
<div style="left:309px;top:65px;width:27.15px;height:15.15px;background:#c2c2c2;"></div>
<span style="left:307.58px;top:65px;width:30px;text-align:center;font-size:9.5px;color:#262626;">40</span>
<div style="left:337px;top:65px;width:27.15px;height:15.15px;background:#c2c2c2;"></div>
<span style="left:335.58px;top:65px;width:30px;text-align:center;font-size:9.5px;color:#262626;">40</span>
<div style="left:365px;top:65px;width:27.15px;height:15.15px;background:#c2c2c2;"></div>
<span style="left:363.58px;top:65px;width:30px;text-align:center;font-size:9.5px;color:#262626;">40</span>
<div style="left:393px;top:65px;width:27.15px;height:15.15px;background:#c2c2c2;"></div>
<span style="left:391.58px;top:65px;width:30px;text-align:center;font-size:9.5px;color:#262626;">40</span>
<div style="left:421px;top:65px;width:27.15px;height:15.15px;background:#ebebeb;"></div>
<span style="left:419.58px;top:65px;width:30px;text-align:center;font-size:9.5px;color:#262626;">40</span>
<div style="left:449px;top:65px;width:27.15px;height:15.15px;background:#a1a1a1;"></div>
<span style="left:447.58px;top:65px;width:30px;text-align:center;font-size:9.5px;color:#262626;">40</span>
<div style="left:477px;top:65px;width:27.15px;height:15.15px;background:#c2c2c2;"></div>
<span style="left:475.58px;top:65px;width:30px;text-align:center;font-size:9.5px;color:#262626;">40</span>
<div style="left:505px;top:65px;width:27.15px;height:15.15px;background:#c2c2c2;"></div>
<span style="left:503.58px;top:65px;width:30px;text-align:center;font-size:9.5px;color:#262626;">40</span>
<div style="left:533px;top:65px;width:28.15px;height:15.15px;background:#c2c2c2;"></div>
<span style="left:532.08px;top:65px;width:30px;text-align:center;font-size:9.5px;color:#262626;">40</span>
<div style="left:562px;top:65px;width:27.15px;height:15.15px;background:#c2c2c2;"></div>
<span style="left:560.58px;top:65px;width:30px;text-align:center;font-size:9.5px;color:#262626;">40</span>
<div style="left:590px;top:65px;width:27.15px;height:15.15px;background:#c2c2c2;"></div>
<span style="left:588.58px;top:65px;width:30px;text-align:center;font-size:9.5px;color:#262626;">40</span>
<div style="left:618px;top:65px;width:27.15px;height:15.15px;background:#ebebeb;"></div>
<span style="left:616.58px;top:65px;width:30px;text-align:center;font-size:9.5px;color:#262626;">40</span>
<div style="left:646px;top:65px;width:27.15px;height:15.15px;background:#a1a1a1;"></div>
<span style="left:644.58px;top:65px;width:30px;text-align:center;font-size:9.5px;color:#262626;">40</span>
<div style="left:674px;top:65px;width:27.15px;height:15.15px;background:#c2c2c2;"></div>
<span style="left:672.58px;top:65px;width:30px;text-align:center;font-size:9.5px;color:#262626;">40</span>
<div style="left:702px;top:65px;width:27.15px;height:15.15px;background:#c2c2c2;"></div>
<span style="left:700.58px;top:65px;width:30px;text-align:center;font-size:9.5px;color:#262626;">40</span>
<div style="left:730px;top:65px;width:27.15px;height:15.15px;background:#c2c2c2;"></div>
<span style="left:728.58px;top:65px;width:30px;text-align:center;font-size:9.5px;color:#262626;">40</span>
<div style="left:758px;top:65px;width:27.15px;height:15.15px;background:#c2c2c2;"></div>
<span style="left:756.58px;top:65px;width:30px;text-align:center;font-size:9.5px;color:#262626;">40</span>
<div style="left:786px;top:65px;width:27.15px;height:15.15px;background:#c2c2c2;"></div>
<span style="left:784.58px;top:65px;width:30px;text-align:center;font-size:9.5px;color:#262626;">40</span>
<div style="left:814px;top:65px;width:27.15px;height:15.15px;background:#ebebeb;"></div>
<span style="left:812.58px;top:65px;width:30px;text-align:center;font-size:9.5px;color:#262626;">40</span>
<div style="left:842px;top:65px;width:27.15px;height:15.15px;background:#a1a1a1;"></div>
<span style="left:840.58px;top:65px;width:30px;text-align:center;font-size:9.5px;color:#262626;">40</span>
<div style="left:1px;top:81px;width:27.15px;height:15.15px;background:#c2c2c2;"></div>
<span style="left:-0.43px;top:81px;width:30px;text-align:center;font-size:9.5px;color:#262626;">31</span>
<div style="left:29px;top:81px;width:27.15px;height:15.15px;background:#ebebeb;"></div>
<span style="left:27.57px;top:81px;width:30px;text-align:center;font-size:9.5px;color:#262626;">31</span>
<div style="left:57px;top:81px;width:27.15px;height:15.15px;background:#a1a1a1;"></div>
<span style="left:55.57px;top:81px;width:30px;text-align:center;font-size:9.5px;color:#262626;">31</span>
<div style="left:85px;top:81px;width:27.15px;height:15.15px;background:#c2c2c2;"></div>
<span style="left:83.57px;top:81px;width:30px;text-align:center;font-size:9.5px;color:#262626;">31</span>
<div style="left:113px;top:81px;width:27.15px;height:15.15px;background:#c2c2c2;"></div>
<span style="left:111.57px;top:81px;width:30px;text-align:center;font-size:9.5px;color:#262626;">31</span>
<div style="left:141px;top:81px;width:27.15px;height:15.15px;background:#c2c2c2;"></div>
<span style="left:139.57px;top:81px;width:30px;text-align:center;font-size:9.5px;color:#262626;">31</span>
<div style="left:169px;top:81px;width:27.15px;height:15.15px;background:#c2c2c2;"></div>
<span style="left:167.57px;top:81px;width:30px;text-align:center;font-size:9.5px;color:#262626;">31</span>
<div style="left:197px;top:81px;width:27.15px;height:15.15px;background:#3d4251;"></div>
<span style="left:195.58px;top:81px;width:30px;text-align:center;font-size:9.5px;color:#ececec;">31</span>
<div style="left:225px;top:81px;width:27.15px;height:15.15px;background:#ebebeb;"></div>
<span style="left:223.58px;top:81px;width:30px;text-align:center;font-size:9.5px;color:#262626;">31</span>
<div style="left:253px;top:81px;width:27.15px;height:15.15px;background:#a1a1a1;"></div>
<span style="left:251.58px;top:81px;width:30px;text-align:center;font-size:9.5px;color:#262626;">31</span>
<div style="left:281px;top:81px;width:27.15px;height:15.15px;background:#c2c2c2;"></div>
<span style="left:279.58px;top:81px;width:30px;text-align:center;font-size:9.5px;color:#262626;">31</span>
<div style="left:309px;top:81px;width:27.15px;height:15.15px;background:#c2c2c2;"></div>
<span style="left:307.58px;top:81px;width:30px;text-align:center;font-size:9.5px;color:#262626;">31</span>
<div style="left:337px;top:81px;width:27.15px;height:15.15px;background:#c2c2c2;"></div>
<span style="left:335.58px;top:81px;width:30px;text-align:center;font-size:9.5px;color:#262626;">31</span>
<div style="left:365px;top:81px;width:27.15px;height:15.15px;background:#c2c2c2;"></div>
<span style="left:363.58px;top:81px;width:30px;text-align:center;font-size:9.5px;color:#262626;">31</span>
<div style="left:393px;top:81px;width:27.15px;height:15.15px;background:#c2c2c2;"></div>
<span style="left:391.58px;top:81px;width:30px;text-align:center;font-size:9.5px;color:#262626;">31</span>
<div style="left:421px;top:81px;width:27.15px;height:15.15px;background:#ebebeb;"></div>
<span style="left:419.58px;top:81px;width:30px;text-align:center;font-size:9.5px;color:#262626;">31</span>
<div style="left:449px;top:81px;width:27.15px;height:15.15px;background:#a1a1a1;"></div>
<span style="left:447.58px;top:81px;width:30px;text-align:center;font-size:9.5px;color:#262626;">31</span>
<div style="left:477px;top:81px;width:27.15px;height:15.15px;background:#c2c2c2;"></div>
<span style="left:475.58px;top:81px;width:30px;text-align:center;font-size:9.5px;color:#262626;">31</span>
<div style="left:505px;top:81px;width:27.15px;height:15.15px;background:#c2c2c2;"></div>
<span style="left:503.58px;top:81px;width:30px;text-align:center;font-size:9.5px;color:#262626;">31</span>
<div style="left:533px;top:81px;width:28.15px;height:15.15px;background:#c2c2c2;"></div>
<span style="left:532.08px;top:81px;width:30px;text-align:center;font-size:9.5px;color:#262626;">31</span>
<div style="left:562px;top:81px;width:27.15px;height:15.15px;background:#c2c2c2;"></div>
<span style="left:560.58px;top:81px;width:30px;text-align:center;font-size:9.5px;color:#262626;">31</span>
<div style="left:590px;top:81px;width:27.15px;height:15.15px;background:#c2c2c2;"></div>
<span style="left:588.58px;top:81px;width:30px;text-align:center;font-size:9.5px;color:#262626;">31</span>
<div style="left:618px;top:81px;width:27.15px;height:15.15px;background:#ebebeb;"></div>
<span style="left:616.58px;top:81px;width:30px;text-align:center;font-size:9.5px;color:#262626;">31</span>
<div style="left:646px;top:81px;width:27.15px;height:15.15px;background:#a1a1a1;"></div>
<span style="left:644.58px;top:81px;width:30px;text-align:center;font-size:9.5px;color:#262626;">31</span>
<div style="left:674px;top:81px;width:27.15px;height:15.15px;background:#c2c2c2;"></div>
<span style="left:672.58px;top:81px;width:30px;text-align:center;font-size:9.5px;color:#262626;">31</span>
<div style="left:702px;top:81px;width:27.15px;height:15.15px;background:#c2c2c2;"></div>
<span style="left:700.58px;top:81px;width:30px;text-align:center;font-size:9.5px;color:#262626;">31</span>
<div style="left:730px;top:81px;width:27.15px;height:15.15px;background:#c2c2c2;"></div>
<span style="left:728.58px;top:81px;width:30px;text-align:center;font-size:9.5px;color:#262626;">31</span>
<div style="left:758px;top:81px;width:27.15px;height:15.15px;background:#c2c2c2;"></div>
<span style="left:756.58px;top:81px;width:30px;text-align:center;font-size:9.5px;color:#262626;">31</span>
<div style="left:786px;top:81px;width:27.15px;height:15.15px;background:#c2c2c2;"></div>
<span style="left:784.58px;top:81px;width:30px;text-align:center;font-size:9.5px;color:#262626;">31</span>
<div style="left:814px;top:81px;width:27.15px;height:15.15px;background:#ebebeb;"></div>
<span style="left:812.58px;top:81px;width:30px;text-align:center;font-size:9.5px;color:#262626;">31</span>
<div style="left:842px;top:81px;width:27.15px;height:15.15px;background:#a1a1a1;"></div>
<span style="left:840.58px;top:81px;width:30px;text-align:center;font-size:9.5px;color:#262626;">31</span>
<div style="left:1px;top:97px;width:27.15px;height:15.15px;background:#c2c2c2;"></div>
<span style="left:-0.43px;top:97px;width:30px;text-align:center;font-size:9.5px;color:#262626;">12</span>
<div style="left:29px;top:97px;width:27.15px;height:15.15px;background:#ebebeb;"></div>
<span style="left:27.57px;top:97px;width:30px;text-align:center;font-size:9.5px;color:#262626;">14</span>
<div style="left:57px;top:97px;width:27.15px;height:15.15px;background:#a1a1a1;"></div>
<span style="left:55.57px;top:97px;width:30px;text-align:center;font-size:9.5px;color:#262626;">16</span>
<div style="left:85px;top:97px;width:27.15px;height:15.15px;background:#c2c2c2;"></div>
<span style="left:83.57px;top:97px;width:30px;text-align:center;font-size:9.5px;color:#262626;">3</span>
<div style="left:113px;top:97px;width:27.15px;height:15.15px;background:#c2c2c2;"></div>
<span style="left:111.57px;top:97px;width:30px;text-align:center;font-size:9.5px;color:#262626;">3</span>
<div style="left:141px;top:97px;width:27.15px;height:15.15px;background:#c2c2c2;"></div>
<span style="left:139.57px;top:97px;width:30px;text-align:center;font-size:9.5px;color:#262626;">5</span>
<div style="left:169px;top:97px;width:27.15px;height:15.15px;background:#c2c2c2;"></div>
<span style="left:167.57px;top:97px;width:30px;text-align:center;font-size:9.5px;color:#262626;">3</span>
<div style="left:197px;top:97px;width:27.15px;height:15.15px;background:#3d4251;"></div>
<span style="left:195.58px;top:97px;width:30px;text-align:center;font-size:9.5px;color:#ececec;">3</span>
<div style="left:225px;top:97px;width:27.15px;height:15.15px;background:#ebebeb;"></div>
<span style="left:223.58px;top:97px;width:30px;text-align:center;font-size:9.5px;color:#262626;">4</span>
<div style="left:253px;top:97px;width:27.15px;height:15.15px;background:#a1a1a1;"></div>
<span style="left:251.58px;top:97px;width:30px;text-align:center;font-size:9.5px;color:#262626;">5</span>
<div style="left:281px;top:97px;width:27.15px;height:15.15px;background:#c2c2c2;"></div>
<span style="left:279.58px;top:97px;width:30px;text-align:center;font-size:9.5px;color:#262626;">6</span>
<div style="left:309px;top:97px;width:27.15px;height:15.15px;background:#c2c2c2;"></div>
<span style="left:307.58px;top:97px;width:30px;text-align:center;font-size:9.5px;color:#262626;">6</span>
<div style="left:337px;top:97px;width:27.15px;height:15.15px;background:#c2c2c2;"></div>
<span style="left:335.58px;top:97px;width:30px;text-align:center;font-size:9.5px;color:#262626;">7</span>
<div style="left:365px;top:97px;width:27.15px;height:15.15px;background:#c2c2c2;"></div>
<span style="left:363.58px;top:97px;width:30px;text-align:center;font-size:9.5px;color:#262626;">7</span>
<div style="left:393px;top:97px;width:27.15px;height:15.15px;background:#c2c2c2;"></div>
<span style="left:391.58px;top:97px;width:30px;text-align:center;font-size:9.5px;color:#262626;">7</span>
<div style="left:421px;top:97px;width:27.15px;height:15.15px;background:#ebebeb;"></div>
<span style="left:419.58px;top:97px;width:30px;text-align:center;font-size:9.5px;color:#262626;">7</span>
<div style="left:449px;top:97px;width:27.15px;height:15.15px;background:#a1a1a1;"></div>
<span style="left:447.58px;top:97px;width:30px;text-align:center;font-size:9.5px;color:#262626;">7</span>
<div style="left:477px;top:97px;width:27.15px;height:15.15px;background:#c2c2c2;"></div>
<span style="left:475.58px;top:97px;width:30px;text-align:center;font-size:9.5px;color:#262626;">7</span>
<div style="left:505px;top:97px;width:27.15px;height:15.15px;background:#c2c2c2;"></div>
<span style="left:503.58px;top:97px;width:30px;text-align:center;font-size:9.5px;color:#262626;">7</span>
<div style="left:533px;top:97px;width:28.15px;height:15.15px;background:#c2c2c2;"></div>
<span style="left:532.08px;top:97px;width:30px;text-align:center;font-size:9.5px;color:#262626;">20</span>
<div style="left:562px;top:97px;width:27.15px;height:15.15px;background:#c2c2c2;"></div>
<span style="left:560.58px;top:97px;width:30px;text-align:center;font-size:9.5px;color:#262626;">20</span>
<div style="left:590px;top:97px;width:27.15px;height:15.15px;background:#c2c2c2;"></div>
<span style="left:588.58px;top:97px;width:30px;text-align:center;font-size:9.5px;color:#262626;">20</span>
<div style="left:618px;top:97px;width:27.15px;height:15.15px;background:#ebebeb;"></div>
<span style="left:616.58px;top:97px;width:30px;text-align:center;font-size:9.5px;color:#262626;">20</span>
<div style="left:646px;top:97px;width:27.15px;height:15.15px;background:#a1a1a1;"></div>
<span style="left:644.58px;top:97px;width:30px;text-align:center;font-size:9.5px;color:#262626;">20</span>
<div style="left:674px;top:97px;width:27.15px;height:15.15px;background:#c2c2c2;"></div>
<span style="left:672.58px;top:97px;width:30px;text-align:center;font-size:9.5px;color:#262626;">20</span>
<div style="left:702px;top:97px;width:27.15px;height:15.15px;background:#c2c2c2;"></div>
<span style="left:700.58px;top:97px;width:30px;text-align:center;font-size:9.5px;color:#262626;">20</span>
<div style="left:730px;top:97px;width:27.15px;height:15.15px;background:#c2c2c2;"></div>
<span style="left:728.58px;top:97px;width:30px;text-align:center;font-size:9.5px;color:#262626;">20</span>
<div style="left:758px;top:97px;width:27.15px;height:15.15px;background:#c2c2c2;"></div>
<span style="left:756.58px;top:97px;width:30px;text-align:center;font-size:9.5px;color:#262626;">20</span>
<div style="left:786px;top:97px;width:27.15px;height:15.15px;background:#c2c2c2;"></div>
<span style="left:784.58px;top:97px;width:30px;text-align:center;font-size:9.5px;color:#262626;">20</span>
<div style="left:814px;top:97px;width:27.15px;height:15.15px;background:#ebebeb;"></div>
<span style="left:812.58px;top:97px;width:30px;text-align:center;font-size:9.5px;color:#262626;">20</span>
<div style="left:842px;top:97px;width:27.15px;height:15.15px;background:#a1a1a1;"></div>
<span style="left:840.58px;top:97px;width:30px;text-align:center;font-size:9.5px;color:#262626;">20</span>
<div style="left:1px;top:113px;width:27.15px;height:15.15px;background:#fcfefe;"></div>
<div style="left:29px;top:113px;width:27.15px;height:15.15px;background:#ebebeb;"></div>
<div style="left:57px;top:113px;width:27.15px;height:15.15px;background:#a1a1a1;"></div>
<div style="left:85px;top:113px;width:27.15px;height:15.15px;background:#fcfefe;"></div>
<div style="left:113px;top:113px;width:27.15px;height:15.15px;background:#fcfefe;"></div>
<div style="left:141px;top:113px;width:27.15px;height:15.15px;background:#fcfefe;"></div>
<div style="left:169px;top:113px;width:27.15px;height:15.15px;background:#fcfefe;"></div>
<div style="left:197px;top:113px;width:27.15px;height:15.15px;background:#3d4251;"></div>
<div style="left:225px;top:113px;width:27.15px;height:15.15px;background:#ebebeb;"></div>
<div style="left:253px;top:113px;width:27.15px;height:15.15px;background:#a1a1a1;"></div>
<div style="left:281px;top:113px;width:27.15px;height:15.15px;background:#fcfefe;"></div>
<div style="left:309px;top:113px;width:27.15px;height:15.15px;background:#fcfefe;"></div>
<div style="left:337px;top:113px;width:27.15px;height:15.15px;background:#fcfefe;"></div>
<div style="left:365px;top:113px;width:27.15px;height:15.15px;background:#fcfefe;"></div>
<div style="left:393px;top:113px;width:27.15px;height:15.15px;background:#fcfefe;"></div>
<div style="left:421px;top:113px;width:27.15px;height:15.15px;background:#ebebeb;"></div>
<div style="left:449px;top:113px;width:27.15px;height:15.15px;background:#a1a1a1;"></div>
<div style="left:477px;top:113px;width:27.15px;height:15.15px;background:#fcfefe;"></div>
<div style="left:505px;top:113px;width:27.15px;height:15.15px;background:#fcfefe;"></div>
<div style="left:533px;top:113px;width:28.15px;height:15.15px;background:#fcfefe;"></div>
<div style="left:562px;top:113px;width:27.15px;height:15.15px;background:#fcfefe;"></div>
<div style="left:590px;top:113px;width:27.15px;height:15.15px;background:#fcfefe;"></div>
<div style="left:618px;top:113px;width:27.15px;height:15.15px;background:#ebebeb;"></div>
<div style="left:646px;top:113px;width:27.15px;height:15.15px;background:#a1a1a1;"></div>
<div style="left:674px;top:113px;width:27.15px;height:15.15px;background:#fcfefe;"></div>
<div style="left:702px;top:113px;width:27.15px;height:15.15px;background:#fcfefe;"></div>
<div style="left:730px;top:113px;width:27.15px;height:15.15px;background:#fcfefe;"></div>
<div style="left:758px;top:113px;width:27.15px;height:15.15px;background:#fcfefe;"></div>
<div style="left:786px;top:113px;width:27.15px;height:15.15px;background:#fcfefe;"></div>
<div style="left:814px;top:113px;width:27.15px;height:15.15px;background:#ebebeb;"></div>
<div style="left:842px;top:113px;width:27.15px;height:15.15px;background:#a1a1a1;"></div>
<div style="left:1px;top:129px;width:27.15px;height:15.15px;background:#fcfefe;"></div>
<div style="left:29px;top:129px;width:27.15px;height:15.15px;background:#ebebeb;"></div>
<div style="left:57px;top:129px;width:27.15px;height:15.15px;background:#a1a1a1;"></div>
<div style="left:85px;top:129px;width:27.15px;height:15.15px;background:#fcfefe;"></div>
<div style="left:113px;top:129px;width:27.15px;height:15.15px;background:#fcfefe;"></div>
<div style="left:141px;top:129px;width:27.15px;height:15.15px;background:#fcfefe;"></div>
<div style="left:169px;top:129px;width:27.15px;height:15.15px;background:#fcfefe;"></div>
<div style="left:197px;top:129px;width:27.15px;height:15.15px;background:#3d4251;"></div>
<div style="left:225px;top:129px;width:27.15px;height:15.15px;background:#ebebeb;"></div>
<div style="left:253px;top:129px;width:27.15px;height:15.15px;background:#a1a1a1;"></div>
<div style="left:281px;top:129px;width:27.15px;height:15.15px;background:#fcfefe;"></div>
<div style="left:309px;top:129px;width:27.15px;height:15.15px;background:#fcfefe;"></div>
<div style="left:337px;top:129px;width:27.15px;height:15.15px;background:#fcfefe;"></div>
<div style="left:365px;top:129px;width:27.15px;height:15.15px;background:#fcfefe;"></div>
<div style="left:393px;top:129px;width:27.15px;height:15.15px;background:#fcfefe;"></div>
<div style="left:421px;top:129px;width:27.15px;height:15.15px;background:#ebebeb;"></div>
<div style="left:449px;top:129px;width:27.15px;height:15.15px;background:#a1a1a1;"></div>
<div style="left:477px;top:129px;width:27.15px;height:15.15px;background:#fcfefe;"></div>
<div style="left:505px;top:129px;width:27.15px;height:15.15px;background:#fcfefe;"></div>
<div style="left:533px;top:129px;width:28.15px;height:15.15px;background:#fcfefe;"></div>
<div style="left:562px;top:129px;width:27.15px;height:15.15px;background:#fcfefe;"></div>
<div style="left:590px;top:129px;width:27.15px;height:15.15px;background:#fcfefe;"></div>
<div style="left:618px;top:129px;width:27.15px;height:15.15px;background:#ebebeb;"></div>
<div style="left:646px;top:129px;width:27.15px;height:15.15px;background:#a1a1a1;"></div>
<div style="left:674px;top:129px;width:27.15px;height:15.15px;background:#fcfefe;"></div>
<div style="left:702px;top:129px;width:27.15px;height:15.15px;background:#fcfefe;"></div>
<div style="left:730px;top:129px;width:27.15px;height:15.15px;background:#fcfefe;"></div>
<div style="left:758px;top:129px;width:27.15px;height:15.15px;background:#fcfefe;"></div>
<div style="left:786px;top:129px;width:27.15px;height:15.15px;background:#fcfefe;"></div>
<div style="left:814px;top:129px;width:27.15px;height:15.15px;background:#ebebeb;"></div>
<div style="left:842px;top:129px;width:27.15px;height:15.15px;background:#a1a1a1;"></div>
<div style="left:1px;top:145px;width:27.15px;height:15.15px;background:#fcfefe;"></div>
<div style="left:29px;top:145px;width:27.15px;height:15.15px;background:#ebebeb;"></div>
<div style="left:57px;top:145px;width:27.15px;height:15.15px;background:#a1a1a1;"></div>
<div style="left:85px;top:145px;width:27.15px;height:15.15px;background:#fcfefe;"></div>
<div style="left:113px;top:145px;width:27.15px;height:15.15px;background:#fcfefe;"></div>
<div style="left:141px;top:145px;width:27.15px;height:15.15px;background:#fcfefe;"></div>
<div style="left:169px;top:145px;width:27.15px;height:15.15px;background:#fcfefe;"></div>
<div style="left:197px;top:145px;width:27.15px;height:15.15px;background:#3d4251;"></div>
<div style="left:225px;top:145px;width:27.15px;height:15.15px;background:#ebebeb;"></div>
<div style="left:253px;top:145px;width:27.15px;height:15.15px;background:#a1a1a1;"></div>
<div style="left:281px;top:145px;width:27.15px;height:15.15px;background:#fcfefe;"></div>
<div style="left:309px;top:145px;width:27.15px;height:15.15px;background:#fcfefe;"></div>
<div style="left:337px;top:145px;width:27.15px;height:15.15px;background:#fcfefe;"></div>
<div style="left:365px;top:145px;width:27.15px;height:15.15px;background:#fcfefe;"></div>
<div style="left:393px;top:145px;width:27.15px;height:15.15px;background:#fcfefe;"></div>
<div style="left:421px;top:145px;width:27.15px;height:15.15px;background:#ebebeb;"></div>
<div style="left:449px;top:145px;width:27.15px;height:15.15px;background:#a1a1a1;"></div>
<div style="left:477px;top:145px;width:27.15px;height:15.15px;background:#fcfefe;"></div>
<div style="left:505px;top:145px;width:27.15px;height:15.15px;background:#fcfefe;"></div>
<div style="left:533px;top:145px;width:28.15px;height:15.15px;background:#fcfefe;"></div>
<div style="left:562px;top:145px;width:27.15px;height:15.15px;background:#fcfefe;"></div>
<div style="left:590px;top:145px;width:27.15px;height:15.15px;background:#fcfefe;"></div>
<div style="left:618px;top:145px;width:27.15px;height:15.15px;background:#ebebeb;"></div>
<div style="left:646px;top:145px;width:27.15px;height:15.15px;background:#a1a1a1;"></div>
<div style="left:674px;top:145px;width:27.15px;height:15.15px;background:#fcfefe;"></div>
<div style="left:702px;top:145px;width:27.15px;height:15.15px;background:#fcfefe;"></div>
<div style="left:730px;top:145px;width:27.15px;height:15.15px;background:#fcfefe;"></div>
<div style="left:758px;top:145px;width:27.15px;height:15.15px;background:#fcfefe;"></div>
<div style="left:786px;top:145px;width:27.15px;height:15.15px;background:#fcfefe;"></div>
<div style="left:814px;top:145px;width:27.15px;height:15.15px;background:#ebebeb;"></div>
<div style="left:842px;top:145px;width:27.15px;height:15.15px;background:#a1a1a1;"></div>
<div style="left:1px;top:161px;width:27.15px;height:15.15px;background:#fcfefe;"></div>
<div style="left:29px;top:161px;width:27.15px;height:15.15px;background:#ebebeb;"></div>
<div style="left:57px;top:161px;width:27.15px;height:15.15px;background:#a1a1a1;"></div>
<div style="left:85px;top:161px;width:27.15px;height:15.15px;background:#fcfefe;"></div>
<div style="left:113px;top:161px;width:27.15px;height:15.15px;background:#fcfefe;"></div>
<div style="left:141px;top:161px;width:27.15px;height:15.15px;background:#fcfefe;"></div>
<div style="left:169px;top:161px;width:27.15px;height:15.15px;background:#fcfefe;"></div>
<div style="left:197px;top:161px;width:27.15px;height:15.15px;background:#3d4251;"></div>
<div style="left:225px;top:161px;width:27.15px;height:15.15px;background:#ebebeb;"></div>
<div style="left:253px;top:161px;width:27.15px;height:15.15px;background:#a1a1a1;"></div>
<div style="left:281px;top:161px;width:27.15px;height:15.15px;background:#fcfefe;"></div>
<div style="left:309px;top:161px;width:27.15px;height:15.15px;background:#fcfefe;"></div>
<div style="left:337px;top:161px;width:27.15px;height:15.15px;background:#fcfefe;"></div>
<div style="left:365px;top:161px;width:27.15px;height:15.15px;background:#fcfefe;"></div>
<div style="left:393px;top:161px;width:27.15px;height:15.15px;background:#fcfefe;"></div>
<div style="left:421px;top:161px;width:27.15px;height:15.15px;background:#ebebeb;"></div>
<div style="left:449px;top:161px;width:27.15px;height:15.15px;background:#a1a1a1;"></div>
<div style="left:477px;top:161px;width:27.15px;height:15.15px;background:#fcfefe;"></div>
<div style="left:505px;top:161px;width:27.15px;height:15.15px;background:#fcfefe;"></div>
<div style="left:533px;top:161px;width:28.15px;height:15.15px;background:#fcfefe;"></div>
<div style="left:562px;top:161px;width:27.15px;height:15.15px;background:#fcfefe;"></div>
<div style="left:590px;top:161px;width:27.15px;height:15.15px;background:#fcfefe;"></div>
<div style="left:618px;top:161px;width:27.15px;height:15.15px;background:#ebebeb;"></div>
<div style="left:646px;top:161px;width:27.15px;height:15.15px;background:#a1a1a1;"></div>
<div style="left:674px;top:161px;width:27.15px;height:15.15px;background:#fcfefe;"></div>
<div style="left:702px;top:161px;width:27.15px;height:15.15px;background:#fcfefe;"></div>
<div style="left:730px;top:161px;width:27.15px;height:15.15px;background:#fcfefe;"></div>
<div style="left:758px;top:161px;width:27.15px;height:15.15px;background:#fcfefe;"></div>
<div style="left:786px;top:161px;width:27.15px;height:15.15px;background:#fcfefe;"></div>
<div style="left:814px;top:161px;width:27.15px;height:15.15px;background:#ebebeb;"></div>
<div style="left:842px;top:161px;width:27.15px;height:15.15px;background:#a1a1a1;"></div>
<div style="left:1px;top:177px;width:27.15px;height:15.15px;background:#fcfefe;"></div>
<div style="left:29px;top:177px;width:27.15px;height:15.15px;background:#ebebeb;"></div>
<div style="left:57px;top:177px;width:27.15px;height:15.15px;background:#a1a1a1;"></div>
<div style="left:85px;top:177px;width:27.15px;height:15.15px;background:#fcfefe;"></div>
<div style="left:113px;top:177px;width:27.15px;height:15.15px;background:#fcfefe;"></div>
<div style="left:141px;top:177px;width:27.15px;height:15.15px;background:#fcfefe;"></div>
<div style="left:169px;top:177px;width:27.15px;height:15.15px;background:#fcfefe;"></div>
<div style="left:197px;top:177px;width:27.15px;height:15.15px;background:#3d4251;"></div>
<div style="left:225px;top:177px;width:27.15px;height:15.15px;background:#ebebeb;"></div>
<div style="left:253px;top:177px;width:27.15px;height:15.15px;background:#a1a1a1;"></div>
<div style="left:281px;top:177px;width:27.15px;height:15.15px;background:#fcfefe;"></div>
<div style="left:309px;top:177px;width:27.15px;height:15.15px;background:#fcfefe;"></div>
<div style="left:337px;top:177px;width:27.15px;height:15.15px;background:#fcfefe;"></div>
<div style="left:365px;top:177px;width:27.15px;height:15.15px;background:#fcfefe;"></div>
<div style="left:393px;top:177px;width:27.15px;height:15.15px;background:#fcfefe;"></div>
<div style="left:421px;top:177px;width:27.15px;height:15.15px;background:#ebebeb;"></div>
<div style="left:449px;top:177px;width:27.15px;height:15.15px;background:#a1a1a1;"></div>
<div style="left:477px;top:177px;width:27.15px;height:15.15px;background:#fcfefe;"></div>
<div style="left:505px;top:177px;width:27.15px;height:15.15px;background:#fcfefe;"></div>
<div style="left:533px;top:177px;width:28.15px;height:15.15px;background:#fcfefe;"></div>
<div style="left:562px;top:177px;width:27.15px;height:15.15px;background:#fcfefe;"></div>
<div style="left:590px;top:177px;width:27.15px;height:15.15px;background:#fcfefe;"></div>
<div style="left:618px;top:177px;width:27.15px;height:15.15px;background:#ebebeb;"></div>
<div style="left:646px;top:177px;width:27.15px;height:15.15px;background:#a1a1a1;"></div>
<div style="left:674px;top:177px;width:27.15px;height:15.15px;background:#fcfefe;"></div>
<div style="left:702px;top:177px;width:27.15px;height:15.15px;background:#fcfefe;"></div>
<div style="left:730px;top:177px;width:27.15px;height:15.15px;background:#fcfefe;"></div>
<div style="left:758px;top:177px;width:27.15px;height:15.15px;background:#fcfefe;"></div>
<div style="left:786px;top:177px;width:27.15px;height:15.15px;background:#fcfefe;"></div>
<div style="left:814px;top:177px;width:27.15px;height:15.15px;background:#ebebeb;"></div>
<div style="left:842px;top:177px;width:27.15px;height:15.15px;background:#a1a1a1;"></div>
<div style="left:197px;top:0.6px;width:27.15px;height:182.6px;background:#3d4251;"></div>
<span style="left:195.58px;top:1px;width:30px;text-align:center;font-size:9.5px;color:#ececec;">100</span>
<span style="left:195.58px;top:17px;width:30px;text-align:center;font-size:9.5px;color:#ececec;">60</span>
<span style="left:195.58px;top:49px;width:30px;text-align:center;font-size:9.5px;color:#ececec;">50</span>
<span style="left:195.58px;top:65px;width:30px;text-align:center;font-size:9.5px;color:#ececec;">40</span>
<span style="left:195.58px;top:81px;width:30px;text-align:center;font-size:9.5px;color:#ececec;">31</span>
<span style="left:195.58px;top:97px;width:30px;text-align:center;font-size:9.5px;color:#ececec;">3</span>
<div style="left:276px;top:34.4px;width:168.4px;height:12.8px;background:linear-gradient(180deg,#f6fcf7 0%,#c9efd0 26%,#c3edcb 100%);"></div>
<span style="left:281.3px;top:33px;font-size:9.7px;color:#2e2e2e;">London Event, 6</span>
<div style="left:1px;top:114.4px;width:14.8px;height:12.8px;background:linear-gradient(180deg,#f6fcf7 0%,#c9efd0 26%,#c3edcb 100%);"></div>
<div style="left:7.66px;top:114.4px;width:8.14px;height:12.8px;background:linear-gradient(90deg,rgba(255,255,255,0),rgba(255,255,255,.55));"></div>
<div style="left:1px;top:130.4px;width:43.6px;height:12.8px;background:linear-gradient(180deg,#f6fcf7 0%,#c9efd0 26%,#c3edcb 100%);"></div>
<div style="left:20.62px;top:130.4px;width:23.98px;height:12.8px;background:linear-gradient(90deg,rgba(255,255,255,0),rgba(255,255,255,.55));"></div>
<span style="left:25.6px;top:129px;font-size:9.7px;color:#2e2e2e;">Ever</span>
<div style="left:1px;top:146.4px;width:39.8px;height:12.8px;background:linear-gradient(180deg,#f6fcf7 0%,#c9efd0 26%,#c3edcb 100%);"></div>
<div style="left:18.91px;top:146.4px;width:21.89px;height:12.8px;background:linear-gradient(90deg,rgba(255,255,255,0),rgba(255,255,255,.55));"></div>
<span style="left:25.6px;top:145px;font-size:9.7px;color:#2e2e2e;">Wo</span>
<div style="left:85px;top:162.4px;width:448px;height:12.8px;background:linear-gradient(180deg,#f6fcf7 0%,#c9efd0 26%,#c3edcb 100%);"></div>
<span style="left:89.2px;top:161px;font-size:9.7px;color:#2e2e2e;">Inauguration Day, 13</span>
<span style="left:1.8px;top:111px;font-size:8.6px;color:#2f5f3a;font-weight:bold;letter-spacing:0.2px;">&lt;&lt;</span>
<span style="left:1.8px;top:127px;font-size:8.6px;color:#2f5f3a;font-weight:bold;letter-spacing:0.2px;">&lt;&lt;</span>
<span style="left:1.8px;top:143px;font-size:8.6px;color:#2f5f3a;font-weight:bold;letter-spacing:0.2px;">&lt;&lt;</span>
</div>
<div style="left:323.2px;top:427.2px;width:873.8px;height:13px;background:#f4f4f4;border-top:1px solid #aab9cc;border-bottom:1px solid #b9c6d6;box-sizing:border-box;"></div>
<div style="left:336px;top:427.6px;width:1px;height:12.4px;background:#f2b134;"></div>
<svg style="left:329.2px;top:430.2px" width="4" height="7" viewBox="0 0 4 7"><path d="M3.6 0 V7 L0 3.5 Z" fill="#1e1e1e"/></svg>
<div style="left:1196px;top:145.4px;width:15px;height:295.8px;background:#f1f1f1;"></div>
<div style="left:1196px;top:145.4px;width:1px;height:295.8px;background:#bcc5d0;"></div>
<div style="left:1208.4px;top:145.4px;width:1px;height:295.8px;background:#c9d0da;"></div>
<div style="left:1196px;top:181.4px;width:15px;height:3.2px;background:#fbfbfb;border-top:1px solid #bcc5d0;border-bottom:1px solid #bcc5d0;box-sizing:border-box;"></div>
<div style="left:1197px;top:147px;width:11.4px;height:12px;box-sizing:border-box;border:1px solid #d3dae3;background:#f6f6f6;"></div>
<div style="left:1197px;top:168px;width:11.4px;height:12.6px;box-sizing:border-box;border:1px solid #d3dae3;background:#f6f6f6;"></div>
<div style="left:1197px;top:185.4px;width:11.4px;height:10.6px;box-sizing:border-box;border:1px solid #d3dae3;background:#f6f6f6;"></div>
<div style="left:1197px;top:413.8px;width:11.4px;height:11.4px;box-sizing:border-box;border:1px solid #d3dae3;background:#f6f6f6;"></div>
<div style="left:1183.6px;top:428px;width:11.2px;height:10.6px;box-sizing:border-box;border:1px solid #dfe3e8;background:#f6f6f6;"></div>
<svg style="left:1187px;top:429.8px" width="4" height="7" viewBox="0 0 4 7"><path d="M0.2 0 V7 L3.8 3.5 Z" fill="#1e1e1e"/></svg>
<svg style="left:1199.4px;top:151.2px" width="7" height="4" viewBox="0 0 7 4"><path d="M0 3.8 H7 L3.5 0.2 Z" fill="#1e1e1e"/></svg>
<svg style="left:1199.4px;top:172.4px" width="7" height="4" viewBox="0 0 7 4"><path d="M0 0.2 H7 L3.5 3.8 Z" fill="#1e1e1e"/></svg>
<svg style="left:1199.4px;top:188.2px" width="7" height="4" viewBox="0 0 7 4"><path d="M0 3.8 H7 L3.5 0.2 Z" fill="#1e1e1e"/></svg>
<svg style="left:1199.4px;top:417.2px" width="7" height="4" viewBox="0 0 7 4"><path d="M0 0.2 H7 L3.5 3.8 Z" fill="#1e1e1e"/></svg>
<div style="left:320px;top:150.2px;width:37.1px;height:34.5px;box-sizing:border-box;border:2px solid #b90a0a;filter:drop-shadow(2.5px 2.5px 2px rgba(30,20,20,.55));"></div>
<div style="left:1161.2px;top:148.2px;width:36.7px;height:35.8px;box-sizing:border-box;border:2px solid #b90a0a;filter:drop-shadow(2.5px 2.5px 2px rgba(30,20,20,.55));"></div>
<div style="left:6.2px;top:441.2px;width:1204.8px;height:2.2px;background:linear-gradient(180deg,#b8c4d2,#e9edf2);"></div>
<div style="left:11.2px;top:450.3px;width:9.8px;height:9.8px;box-sizing:border-box;border:1px solid #262626;background:#a9a9a9;"></div>
<span style="left:25.9px;top:446px;font-size:8.8px;color:#3d424e;font-weight:bold;letter-spacing:0.017px;">Not Available/In (NA)</span>
<div style="left:120.6px;top:450.3px;width:9.8px;height:9.8px;box-sizing:border-box;border:1px solid #262626;background:#ff2400;"></div>
<span style="left:133px;top:446px;font-size:8.8px;color:#3d424e;font-weight:bold;letter-spacing:-0.037px;">Short</span>
<div style="left:163.8px;top:450.3px;width:9.8px;height:9.8px;box-sizing:border-box;border:1px solid #262626;background:#c6efce;"></div>
<span style="left:176.3px;top:446px;font-size:8.8px;color:#3d424e;font-weight:bold;letter-spacing:0.319px;">Reserved/T-Reserved</span>
<div style="left:280px;top:450.3px;width:9.8px;height:9.8px;box-sizing:border-box;border:1px solid #262626;background:#6b8e23;"></div>
<span style="left:292.7px;top:446px;font-size:8.8px;color:#3d424e;font-weight:bold;letter-spacing:-0.156px;">Hold</span>
<div style="left:320px;top:450.3px;width:9.8px;height:9.8px;box-sizing:border-box;border:1px solid #262626;background:#3f97f2;"></div>
<span style="left:331.7px;top:446px;font-size:8.8px;color:#3d424e;font-weight:bold;letter-spacing:-0.070px;">Filled</span>
<div style="left:363.3px;top:450.3px;width:9.8px;height:9.8px;box-sizing:border-box;border:1px solid #262626;background:#fac090;"></div>
<span style="left:377.3px;top:446px;font-size:8.8px;color:#3d424e;font-weight:bold;letter-spacing:-0.062px;">Out</span>
<div style="left:400px;top:450.3px;width:9.8px;height:9.8px;box-sizing:border-box;border:1px solid #262626;background:#f79646;"></div>
<span style="left:414.7px;top:446px;font-size:8.8px;color:#3d424e;font-weight:bold;letter-spacing:0.138px;">Overdue</span>
<div style="left:460px;top:450.3px;width:9.8px;height:9.8px;box-sizing:border-box;border:1px solid #262626;background:#008000;"></div>
<span style="left:474.7px;top:446px;font-size:8.8px;color:#3d424e;font-weight:bold;letter-spacing:0.223px;">Returned</span>
<div style="left:524px;top:450.3px;width:9.8px;height:9.8px;box-sizing:border-box;border:1px solid #262626;background:#4f81bd;"></div>
<span style="left:537.3px;top:446px;font-size:8.8px;color:#3d424e;font-weight:bold;letter-spacing:0.181px;">T-Receive/Inventory PO/P-Assigned</span>
<div style="left:703px;top:450.3px;width:9.8px;height:9.8px;box-sizing:border-box;border:1px solid #262626;background:#c4d79b;"></div>
<span style="left:717.3px;top:446px;font-size:8.8px;color:#3d424e;font-weight:bold;letter-spacing:0.374px;">In Transfer/Transfer order/Transfer-Out</span>
<div style="left:904px;top:450.3px;width:9.8px;height:9.8px;box-sizing:border-box;border:1px solid #262626;background:#66f000;"></div>
<span style="left:916.3px;top:446px;font-size:8.8px;color:#3d424e;font-weight:bold;letter-spacing:0.218px;">Hold Asset</span>
<span style="left:997.3px;top:446px;font-size:8.8px;color:#3d424e;font-weight:bold;letter-spacing:-0.182px;">Out</span>
<div style="left:1022px;top:450.3px;width:9.8px;height:9.8px;box-sizing:border-box;border:1px solid #262626;background:#66f000;"></div>
<span style="left:1034.7px;top:446px;font-size:8.8px;color:#3d424e;font-weight:bold;letter-spacing:0.282px;">Hold Asset</span>
<div style="left:11.2px;top:470.1px;width:9.8px;height:9.8px;box-sizing:border-box;border:1px solid #262626;background:#a05fd0;"></div>
<span style="left:27.6px;top:466px;font-size:8.8px;color:#3d424e;font-weight:bold;letter-spacing:0.222px;">Transfer/Purchase/Sub Rent</span>
<div style="left:159.3px;top:470.1px;width:9.8px;height:9.8px;box-sizing:border-box;border:1px solid #262626;background:#8b3232;"></div>
<span style="left:173.6px;top:466px;font-size:8.8px;color:#3d424e;font-weight:bold;letter-spacing:0.063px;">Damaged(NA)/Repair</span>
<div style="left:270.7px;top:470.1px;width:9.8px;height:9.8px;box-sizing:border-box;border:1px solid #262626;background:#ffc0cb;"></div>
<span style="left:285px;top:466px;font-size:8.8px;color:#3d424e;font-weight:bold;letter-spacing:0.238px;">Missing</span>
<div style="left:327.3px;top:470.1px;width:9.8px;height:9.8px;box-sizing:border-box;border:1px solid #262626;background:#f4607c;"></div>
<span style="left:341.7px;top:466px;font-size:8.8px;color:#3d424e;font-weight:bold;letter-spacing:0.206px;">Lost</span>
<div style="left:369px;top:470.1px;width:9.8px;height:9.8px;box-sizing:border-box;border:1px solid #262626;background:#cbc2ec;"></div>
<span style="left:384px;top:466px;font-size:8.8px;color:#3d424e;font-weight:bold;letter-spacing:0.073px;">Sub Rent PO/Locked</span>
<div style="left:480.7px;top:470.1px;width:9.8px;height:9.8px;box-sizing:border-box;border:1px solid #262626;background:#a9c4ee;"></div>
<span style="left:495.7px;top:466px;font-size:8.8px;color:#3d424e;font-weight:bold;letter-spacing:0.054px;">S-Assigned/S-Fill/S-Out/S-Return</span>
<div style="left:645px;top:470.1px;width:9.8px;height:9.8px;box-sizing:border-box;border:1px solid #262626;background:#ffffcc;"></div>
<span style="left:658px;top:466px;font-size:8.8px;color:#3d424e;font-weight:bold;letter-spacing:0.033px;">Quote / Billing Order</span>
<div style="left:752.3px;top:470.1px;width:9.8px;height:9.8px;box-sizing:border-box;border:1px solid #262626;background:#ffc000;"></div>
<span style="left:766.3px;top:466px;font-size:8.8px;color:#3d424e;font-weight:bold;letter-spacing:-0.389px;">Sold</span>
<div style="left:791.7px;top:470.1px;width:9.8px;height:9.8px;box-sizing:border-box;border:1px solid #262626;background:#747474;"></div>
<span style="left:808px;top:466px;font-size:8.8px;color:#3d424e;font-weight:bold;letter-spacing:0.139px;">Retire</span>
<div style="left:840.3px;top:470.1px;width:9.8px;height:9.8px;box-sizing:border-box;border:1px solid #262626;background:#ffff00;"></div>
<span style="left:856.3px;top:466px;font-size:8.8px;color:#3d424e;font-weight:bold;letter-spacing:0.333px;">Quote Asset</span>
<div style="left:920.3px;top:470.1px;width:9.8px;height:9.8px;box-sizing:border-box;border:1px solid #262626;background:#50c990;"></div>
<span style="left:937px;top:466px;font-size:8.8px;color:#3d424e;font-weight:bold;letter-spacing:-0.218px;">Pool</span>
<div style="left:960.3px;top:470.1px;width:9.8px;height:9.8px;box-sizing:border-box;border:1px solid #262626;background:#4b5a28;"></div>
<span style="left:976.3px;top:466px;font-size:8.8px;color:#3d424e;font-weight:bold;letter-spacing:0.044px;">Hold</span>
<span style="left:996.6px;top:466px;font-size:8.8px;color:#3d424e;font-weight:bold;letter-spacing:0.628px;">&#8250; Asset</span>
<div style="left:1039px;top:470.1px;width:9.8px;height:9.8px;box-sizing:border-box;border:1px solid #262626;background:#50c990;"></div>
<span style="left:1054.7px;top:466px;font-size:8.8px;color:#3d424e;font-weight:bold;letter-spacing:-0.018px;">Pool</span>
<div style="left:1078.7px;top:470.1px;width:9.8px;height:9.8px;box-sizing:border-box;border:1px solid #262626;background:#4b5a28;"></div>
<span style="left:1094.7px;top:466px;font-size:8.8px;color:#3d424e;font-weight:bold;letter-spacing:0.037px;">Hold (Pool)</span>
<div style="left:0px;top:489.8px;width:1211px;height:6.2px;background:#e9916b;"></div>
<div style="left:5.2px;top:489.6px;width:1205.8px;height:1px;background:#dd8762;"></div>
<div style="left:0px;top:495px;width:1211px;height:1px;background:#c77a57;"></div>
</body></html>
